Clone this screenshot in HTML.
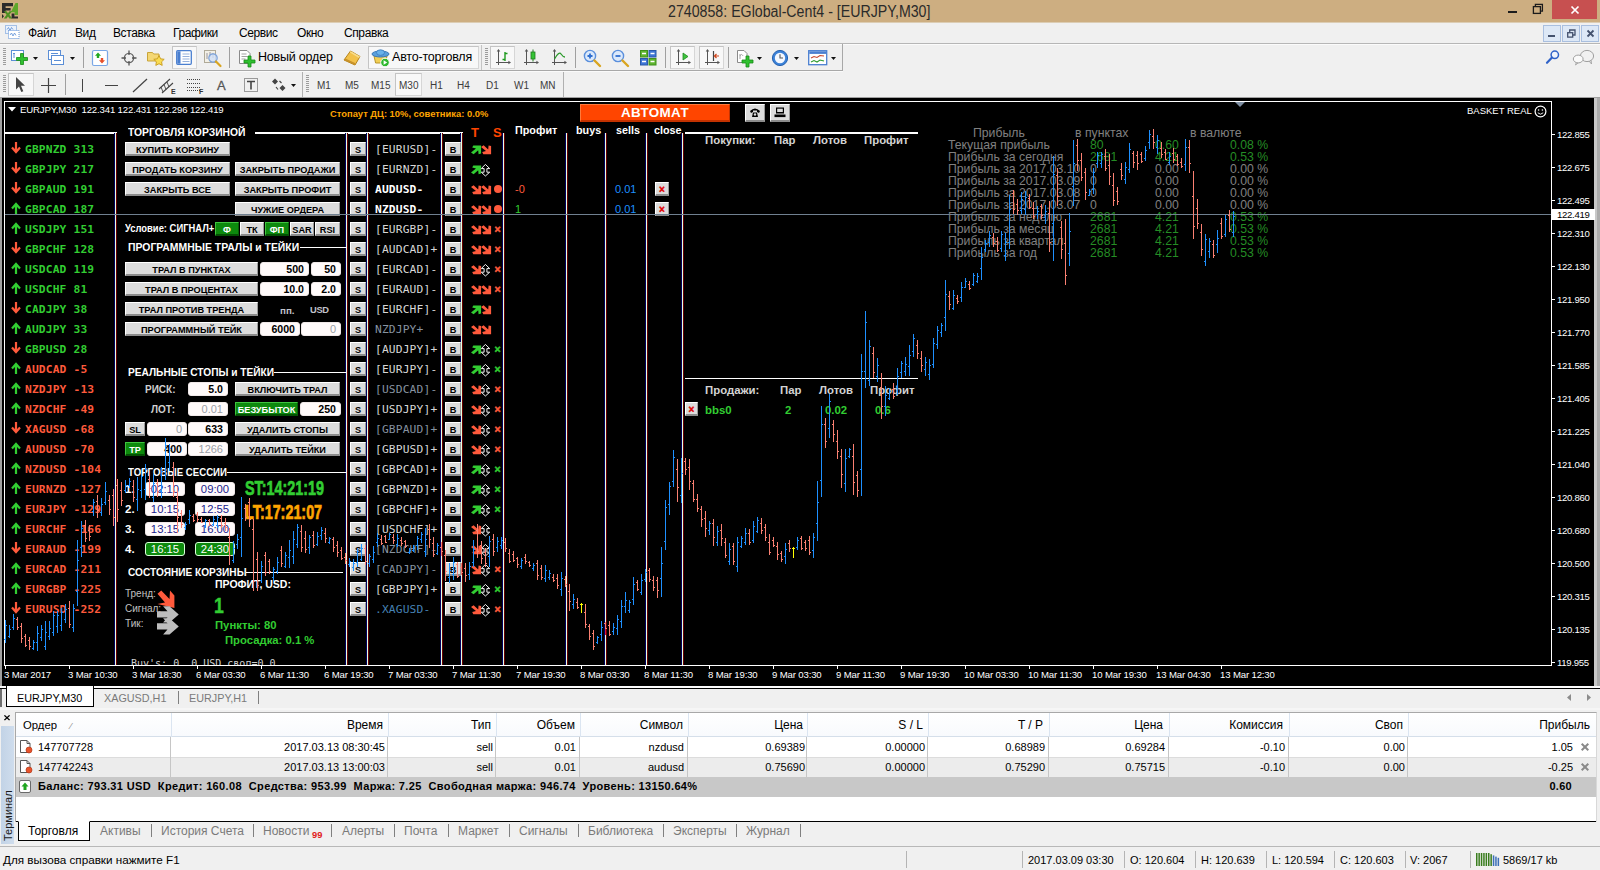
<!DOCTYPE html>
<html lang="ru"><head><meta charset="utf-8"><title>2740858: EGlobal-Cent4 - [EURJPY,M30]</title>
<style>
html,body{margin:0;padding:0;}
body{width:1600px;height:870px;overflow:hidden;background:#f0f0f0;position:relative;font-family:"Liberation Sans",sans-serif;font-size:11px;color:#000;}
div{position:absolute;box-sizing:border-box;white-space:nowrap;}
svg{position:absolute;overflow:visible;}
.t{line-height:1;}
.menu{font-size:12px;letter-spacing:-0.4px;top:26px;color:#000;}
.tb{font-size:12.5px;letter-spacing:-0.2px;}
.tf{font-size:10px;color:#3c3c3c;}
.btn{background:#dcdcdc;border-top:1px solid #fff;border-left:1px solid #fff;border-right:1px solid #9a9a9a;border-bottom:2px solid #8c8c8c;color:#000;font-weight:bold;font-size:9.2px;text-align:center;line-height:12px;}
.btn span{position:absolute;left:50%;top:1px;transform:translateX(-50%);white-space:nowrap;}
.btn.g{background:#0d8a0d;color:#fff;border-top:1px solid #3fc33f;border-left:1px solid #3fc33f;border-right:1px solid #056005;border-bottom:2px solid #045004;}
.inp{background:#fffafa;border-radius:3px;color:#000;font-size:10.6px;font-weight:bold;text-align:right;line-height:13px;padding-right:4px;border:1px solid #f0e8e8;}
.inp.gy{color:#9a9ea6;font-weight:normal;font-size:11px;}
.inp.nv{color:#1a1a8c;text-align:center;padding-right:0;font-weight:normal;font-size:11.3px;}
.inp.gr{background:#0d8a0d;color:#fff;text-align:center;padding-right:0;border:1px solid #d8ffd8;font-weight:normal;font-size:11.3px;}
.hd{color:#fff;font-weight:bold;font-size:11px;transform:scaleX(.94);transform-origin:0 0;}
.mono{font-family:"DejaVu Sans Mono","Liberation Mono",monospace;font-weight:bold;font-size:11.25px;letter-spacing:.15px;}
.ax{color:#fff;font-size:9.6px;letter-spacing:-0.15px;}
.axp{letter-spacing:-0.3px;}
.st{font-size:12.25px;color:#808080;}
.gn{color:#258d25;}
.cell{font-size:11px;color:#000;}
.tab{font-size:12px;color:#7a7a7a;}
</style></head>
<body>
<div style="left:0px;top:0px;width:1600px;height:22px;background:#cdae81;"></div>
<div style="left:0px;top:22px;width:1600px;height:1px;background:#dccdb4;"></div>
<svg style="left:2px;top:3px" width="17" height="16" viewBox="0 0 17 16"><path d="M0 0 H11 V3.300 H3.600 V5 H8.600 V7.600 H3.600 V10 H0 Z" fill="#2a2a2a"/><path d="M13.500 0 L16 0 L16 12 L12.600 12 L12.600 9.200 L8.800 9.200 Z" fill="#5fa72a"/><path d="M0 11 L2 13.200 L0 15.600 Z" fill="#2a2a2a"/><path d="M1.800 8.200 H4.600 L6 10.200 L7.400 8.200 H10 L7.400 11.800 L10.200 15.600 H7.400 L6 13.500 L4.600 15.600 H1.800 L4.600 11.800 Z" fill="#4c8f22"/><path d="M9.600 10.400 H12.400 V13.400 H16 V15.600 H9.600 Z" fill="#2a2a2a"/></svg>
<div class="t" style="left:668px;top:3.7px;font-size:16px;color:#2a2a2a;transform:scaleX(.887);transform-origin:0 0;">2740858: EGlobal-Cent4 - [EURJPY,M30]</div>
<div style="left:1508px;top:10.6px;width:8.5px;height:2.4px;background:#1c1c1c;"></div>
<svg style="left:1532px;top:3px" width="12" height="12" viewBox="0 0 12 12" fill="none" stroke="#1c1c1c" stroke-width="1.300"><rect x="1.400" y="3.600" width="7" height="6.800"/><path d="M3.400 3.400 V1.400 H10.400 V8.200 H8.600"/></svg>
<div style="left:1552px;top:0px;width:45px;height:19px;background:#c75050;"></div>
<svg style="left:1571px;top:5.500px" width="8" height="8" viewBox="0 0 8 8" stroke="#fff" stroke-width="1.700"><path d="M0.500 0.500 L7.500 7.500 M7.500 0.500 L0.500 7.500"/></svg>
<div style="left:0px;top:23px;width:1600px;height:21px;background:#f0f0f0;"></div>
<div style="left:0px;top:43px;width:1600px;height:1px;background:#b6b6b6;"></div>
<svg style="left:5px;top:25px" width="15" height="14" viewBox="0 0 15 14" fill="#fff" stroke="#5b8ed6" stroke-width="1"><rect x="0.500" y="0.500" width="11" height="8" stroke-dasharray="1 1" fill="#eaf1fb"/><path d="M2 4.500 l1.500 -2 1.500 3 1.500 -3 1.500 2" fill="none" stroke-width="0.800"/><rect x="3.500" y="5.500" width="10.500" height="8" stroke-dasharray="1 1"/><path d="M5 10 l1.500 -2 1.500 3 1.500 -3 1.500 2.500" fill="none" stroke-width="0.800"/></svg>
<div class="t menu" style="left:28px;top:27px;">Файл</div>
<div class="t menu" style="left:75px;top:27px;">Вид</div>
<div class="t menu" style="left:113px;top:27px;">Вставка</div>
<div class="t menu" style="left:173px;top:27px;">Графики</div>
<div class="t menu" style="left:239px;top:27px;">Сервис</div>
<div class="t menu" style="left:297px;top:27px;">Окно</div>
<div class="t menu" style="left:344px;top:27px;">Справка</div>
<div style="left:1543px;top:24.5px;width:18px;height:17px;background:#dde8f6;border:1px solid #a9bfdf;"></div>
<div style="left:1562px;top:24.5px;width:18px;height:17px;background:#dde8f6;border:1px solid #a9bfdf;"></div>
<div style="left:1581px;top:24.5px;width:18px;height:17px;background:#dde8f6;border:1px solid #a9bfdf;"></div>
<div style="left:1548px;top:34.7px;width:6.5px;height:2.3px;background:#44526e;"></div>
<svg style="left:1567px;top:28.500px" width="9" height="9" viewBox="0 0 9 9" fill="none" stroke="#44526e" stroke-width="1.300"><rect x="0.700" y="3.700" width="5" height="4.400"/><path d="M2.700 3.400 V1 H8 V6 H6"/></svg>
<svg style="left:1587px;top:30px" width="7" height="7" viewBox="0 0 7 7" stroke="#44526e" stroke-width="1.800"><path d="M0.500 0.500 L6.500 6.500 M6.500 0.500 L0.500 6.500"/></svg>
<div style="left:0px;top:44px;width:1600px;height:27px;background:#f0f0f0;border-top:1px solid #fbfbfb;"></div>
<div style="left:0px;top:70px;width:843px;height:1px;background:#a8a8a8;"></div>
<div style="left:842px;top:44px;width:1px;height:27px;background:#a8a8a8;"></div>
<div style="left:0px;top:71px;width:1600px;height:27px;background:#f0f0f0;"></div>
<div style="left:0px;top:71px;width:843px;height:1px;background:#fafafa;"></div>
<div style="left:302px;top:72px;width:1px;height:25px;background:#b0b0b0;"></div>
<div style="left:563px;top:72px;width:1px;height:25px;background:#b0b0b0;"></div>
<div style="left:3px;top:48px;width:3px;height:18px;background:repeating-linear-gradient(180deg,#9c9c9c 0,#9c9c9c 1px,#f0f0f0 1px,#f0f0f0 2px);"></div>
<div style="left:3px;top:75px;width:3px;height:18px;background:repeating-linear-gradient(180deg,#9c9c9c 0,#9c9c9c 1px,#f0f0f0 1px,#f0f0f0 2px);"></div>
<div style="left:485px;top:48px;width:3px;height:18px;background:repeating-linear-gradient(180deg,#9c9c9c 0,#9c9c9c 1px,#f0f0f0 1px,#f0f0f0 2px);"></div>
<div style="left:306px;top:75px;width:3px;height:18px;background:repeating-linear-gradient(180deg,#9c9c9c 0,#9c9c9c 1px,#f0f0f0 1px,#f0f0f0 2px);"></div>
<div style="left:83px;top:47px;width:1px;height:21px;background:#a0a0a0;"></div>
<div style="left:229px;top:47px;width:1px;height:21px;background:#a0a0a0;"></div>
<div style="left:575px;top:47px;width:1px;height:21px;background:#a0a0a0;"></div>
<div style="left:665px;top:47px;width:1px;height:21px;background:#a0a0a0;"></div>
<div style="left:728px;top:47px;width:1px;height:21px;background:#a0a0a0;"></div>
<div style="left:481px;top:45px;width:1px;height:25px;background:#c4c4c4;"></div>
<div style="left:65px;top:74px;width:1px;height:21px;background:#a0a0a0;"></div>
<div style="left:172px;top:46px;width:25px;height:23px;background:#f8f8f8;border:1px solid #d6d6d6;border-top-color:#c4c4c4;border-left-color:#c4c4c4;"></div>
<div style="left:368px;top:46px;width:111px;height:23px;background:#f8f8f8;border:1px solid #d6d6d6;border-top-color:#c4c4c4;border-left-color:#c4c4c4;"></div>
<div style="left:490px;top:46px;width:25px;height:23px;background:#f8f8f8;border:1px solid #d6d6d6;border-top-color:#c4c4c4;border-left-color:#c4c4c4;"></div>
<div style="left:670px;top:46px;width:25px;height:23px;background:#f8f8f8;border:1px solid #d6d6d6;border-top-color:#c4c4c4;border-left-color:#c4c4c4;"></div>
<div style="left:699px;top:46px;width:25px;height:23px;background:#f8f8f8;border:1px solid #d6d6d6;border-top-color:#c4c4c4;border-left-color:#c4c4c4;"></div>
<div style="left:8px;top:73px;width:26px;height:23px;background:#f8f8f8;border:1px solid #d6d6d6;border-top-color:#c4c4c4;border-left-color:#c4c4c4;"></div>
<div style="left:395px;top:73px;width:27px;height:23px;background:#f8f8f8;border:1px solid #d6d6d6;border-top-color:#c4c4c4;border-left-color:#c4c4c4;"></div>
<svg style="left:33px;top:56.5px" width="5" height="3" viewBox="0 0 5 3"><path d="M0 0 H5 L2.500 3 Z" fill="#111"/></svg>
<svg style="left:70px;top:56.5px" width="5" height="3" viewBox="0 0 5 3"><path d="M0 0 H5 L2.500 3 Z" fill="#111"/></svg>
<svg style="left:757px;top:56.5px" width="5" height="3" viewBox="0 0 5 3"><path d="M0 0 H5 L2.500 3 Z" fill="#111"/></svg>
<svg style="left:794px;top:56.5px" width="5" height="3" viewBox="0 0 5 3"><path d="M0 0 H5 L2.500 3 Z" fill="#111"/></svg>
<svg style="left:831px;top:56.5px" width="5" height="3" viewBox="0 0 5 3"><path d="M0 0 H5 L2.500 3 Z" fill="#111"/></svg>
<svg style="left:291px;top:83.5px" width="5" height="3" viewBox="0 0 5 3"><path d="M0 0 H5 L2.500 3 Z" fill="#111"/></svg>
<svg style="left:10px;top:49px" width="19" height="17" viewBox="0 0 19 17" ><rect x="1.5" y="1.5" width="12" height="10" fill="#fff" stroke="#5b8ed6"/><path d="M4 4 v5 M3 5 l1-1 1 1" stroke="#5b8ed6" fill="none"/><path d="M10.5 4.5 h3 v4.0 h4.0 v3 h-4.0 v4.0 h-3 v-4.0 h-4.0 v-3 h4.0 z" fill="#2fc02f" stroke="#168a16" stroke-width="0.8"/></svg>
<svg style="left:47px;top:49px" width="19" height="17" viewBox="0 0 19 17" ><rect x="1.5" y="1.5" width="12" height="9" fill="#fff" stroke="#5b8ed6"/><rect x="4.5" y="6.5" width="12" height="9" fill="#fff" stroke="#5b8ed6"/><path d="M4 4.5 h7 M7 11.5 h7" stroke="#5b8ed6"/></svg>
<svg style="left:92px;top:50px" width="16" height="16" viewBox="0 0 16 16" ><rect x="0.5" y="0.5" width="15" height="15" rx="1.5" fill="#fff" stroke="#7aa7e6" stroke-width="1.2"/><path d="M6 2.5 l3 3.2 h-1.8 v2.3 h-2.4 v-2.3 h-1.8 z" fill="#22a822"/><path d="M10 13.5 l-3 -3.2 h1.8 v-2.3 h2.4 v2.3 h1.8 z" fill="#e8502a"/></svg>
<svg style="left:121px;top:50px" width="16" height="16" viewBox="0 0 16 16" ><circle cx="8" cy="8" r="4.6" fill="none" stroke="#666" stroke-width="1.4"/><path d="M8 0.5 V5 M8 11 V15.5 M0.5 8 H5 M11 8 H15.5" stroke="#555" stroke-width="1.3"/></svg>
<svg style="left:146px;top:49px" width="20" height="18" viewBox="0 0 20 18" ><path d="M1.5 3.5 h5 l1.2 1.5 h5.3 v7 h-11.5 z" fill="#f4d774" stroke="#c9a53a"/><path d="M13 6.5 l1.6 3.3 3.6 0.5 -2.6 2.5 0.6 3.6 -3.2 -1.7 -3.2 1.7 0.6 -3.6 -2.6 -2.5 3.6 -0.5 z" fill="#f9dc52" stroke="#c79a1c" stroke-width="0.9"/></svg>
<svg style="left:176px;top:50px" width="16" height="15" viewBox="0 0 16 15" ><rect x="0.7" y="0.7" width="14.6" height="13.6" rx="1" fill="#fff" stroke="#4a7fd0" stroke-width="1.3"/><rect x="1.3" y="1.3" width="3.2" height="12.4" fill="#4a7fd0"/><path d="M6.5 4 h7 M6.5 6.5 h7 M6.5 9 h7 M6.5 11.5 h7" stroke="#8aa8d8" stroke-width="0.9"/></svg>
<svg style="left:203px;top:49px" width="20" height="19" viewBox="0 0 20 19" ><rect x="1.5" y="1.5" width="11" height="12" fill="#f3f0e6" stroke="#b0aa98"/><path d="M4 4 v6 M7 3 v5 M10 4 v5" stroke="#9a96a0" stroke-width="1"/><circle cx="10" cy="9" r="4.2" fill="#cfe0f7" fill-opacity="0.8" stroke="#7da2d8" stroke-width="1.2"/><path d="M13 12.5 l4.5 4.5" stroke="#d9a521" stroke-width="2.2" stroke-linecap="round"/></svg>
<svg style="left:238px;top:49px" width="18" height="19" viewBox="0 0 18 19" ><path d="M1.5 1.5 h7.5 l3 3 v10 h-10.5 z" fill="#fff" stroke="#8a8a8a"/><path d="M3.5 5 h5 M3.5 7.5 h6 M3.5 10 h4" stroke="#999" stroke-width="0.9"/><path d="M10.0 7.0 h3 v4.0 h4.0 v3 h-4.0 v4.0 h-3 v-4.0 h-4.0 v-3 h4.0 z" fill="#2fc02f" stroke="#168a16" stroke-width="0.8"/></svg>
<div class="t tb" style="left:258px;top:51px;">Новый ордер</div>
<svg style="left:343px;top:49px" width="20" height="18" viewBox="0 0 20 18" ><path d="M1 11 L7.5 2 L17 7.5 L12 16 Z" fill="#f2c14a" stroke="#b5831a" stroke-width="1"/><path d="M1 11 L12 16 L12.6 14.2 L2.4 9.4 Z" fill="#c8922a"/><path d="M7.5 2 L17 7.5 L16 9 L7 3.5 Z" fill="#f8dc8a"/></svg>
<svg style="left:371px;top:48px" width="20" height="20" viewBox="0 0 20 20" ><path d="M3 8 h13 l-1.6 7 h-9.8 z" fill="#f2cf55" stroke="#b8952a"/><ellipse cx="9.5" cy="6" rx="8.5" ry="3" fill="#5aa0dc" stroke="#3a78b8"/><ellipse cx="9.5" cy="4.6" rx="4" ry="2.8" fill="#6ab2ea" stroke="#3a78b8" stroke-width="0.8"/><circle cx="14" cy="14.5" r="4.3" fill="#2db82d" stroke="#fff" stroke-width="1"/><path d="M12.6 12.2 l3.6 2.3 -3.6 2.3 z" fill="#fff"/></svg>
<div class="t tb" style="left:392px;top:51px;">Авто-торговля</div>
<svg style="left:495px;top:49px" width="17" height="17" viewBox="0 0 17 17" ><path d="M3.5 1 V16 M1 13.5 H15" stroke="#555" stroke-width="1" fill="none"/><path d="M3.5 0 l-1.800 2.600 h3.600 z M16 13.5 l-2.600 -1.800 v3.600 z" fill="#555"/><path d="M10 3 V12 M10 4.5 h2.5 M7.5 10.5 h2.5" stroke="#1f9a1f" stroke-width="1.4" fill="none"/></svg>
<svg style="left:523px;top:49px" width="17" height="17" viewBox="0 0 17 17" ><path d="M3.5 1 V16 M1 13.5 H15" stroke="#555" stroke-width="1" fill="none"/><path d="M3.5 0 l-1.800 2.600 h3.600 z M16 13.5 l-2.600 -1.800 v3.600 z" fill="#555"/><path d="M10 0.5 V12.5" stroke="#1f7a1f" stroke-width="1"/><rect x="8" y="3" width="4" height="7" fill="#35c435" stroke="#1f7a1f" stroke-width="0.8"/></svg>
<svg style="left:551px;top:49px" width="17" height="17" viewBox="0 0 17 17" ><path d="M3.5 1 V16 M1 13.5 H15" stroke="#555" stroke-width="1" fill="none"/><path d="M3.5 0 l-1.800 2.600 h3.600 z M16 13.5 l-2.600 -1.800 v3.600 z" fill="#555"/><path d="M3.5 10 Q8 2 10 5 T14 8" stroke="#2a9a2a" stroke-width="1.3" fill="none"/></svg>
<svg style="left:583px;top:49px" width="20" height="19" viewBox="0 0 20 19" ><circle cx="7" cy="7" r="5.6" fill="#dbe9fb" stroke="#5a8fdc" stroke-width="1.4"/><path d="M4.5 7 h5 M7 4.5 v5" stroke="#2f6fd0" stroke-width="1.8"/><path d="M11.5 11.5 l5.5 5.5" stroke="#d9a521" stroke-width="2.4" stroke-linecap="round"/></svg>
<svg style="left:611px;top:49px" width="20" height="19" viewBox="0 0 20 19" ><circle cx="7" cy="7" r="5.6" fill="#dbe9fb" stroke="#5a8fdc" stroke-width="1.4"/><path d="M4.5 7 h5" stroke="#2f6fd0" stroke-width="1.8"/><path d="M11.5 11.5 l5.5 5.5" stroke="#d9a521" stroke-width="2.4" stroke-linecap="round"/></svg>
<svg style="left:640px;top:50px" width="17" height="16" viewBox="0 0 17 16" ><rect x="0.5" y="0.5" width="7" height="6.5" fill="#5fb52f" stroke="#3f8f1c"/><rect x="9" y="0.5" width="7" height="6.5" fill="#3e76d6" stroke="#2a58a8"/><rect x="0.5" y="8.5" width="7" height="6.5" fill="#3e76d6" stroke="#2a58a8"/><rect x="9" y="8.5" width="7" height="6.5" fill="#5fb52f" stroke="#3f8f1c"/><path d="M2 3.5 h4 M10.5 3.5 h4 M2 11.5 h4 M10.5 11.5 h4" stroke="#fff" stroke-width="1.6"/></svg>
<svg style="left:675px;top:49px" width="17" height="17" viewBox="0 0 17 17" ><path d="M3.5 1 V16 M1 13.5 H15" stroke="#555" stroke-width="1" fill="none"/><path d="M3.5 0 l-1.800 2.600 h3.600 z M16 13.5 l-2.600 -1.800 v3.600 z" fill="#555"/><path d="M8 4 l5 3.5 -5 3.5 z" fill="#3ec43e" stroke="#1f8a1f" stroke-width="0.8"/></svg>
<svg style="left:704px;top:49px" width="17" height="17" viewBox="0 0 17 17" ><path d="M3.5 1 V16 M1 13.5 H15" stroke="#555" stroke-width="1" fill="none"/><path d="M3.5 0 l-1.800 2.600 h3.600 z M16 13.5 l-2.600 -1.800 v3.600 z" fill="#555"/><path d="M9.5 2 V12" stroke="#444" stroke-width="1.2"/><path d="M15 7 h-4 M12.5 5 l-2 2 2 2" stroke="#d0451b" stroke-width="1.2" fill="none"/></svg>
<svg style="left:736px;top:49px" width="18" height="19" viewBox="0 0 18 19" ><path d="M1.5 1.5 h6.5 l3 3 v9 h-9.5 z" fill="#fff" stroke="#8a8a8a"/><path d="M4 5 v5 M4 7 c1 -2 2 -2 3 0" stroke="#999" stroke-width="0.9" fill="none"/><path d="M10.0 7.0 h3 v4.0 h4.0 v3 h-4.0 v4.0 h-3 v-4.0 h-4.0 v-3 h4.0 z" fill="#2fc02f" stroke="#168a16" stroke-width="0.8"/></svg>
<svg style="left:771px;top:49px" width="18" height="18" viewBox="0 0 18 18" ><circle cx="9" cy="9" r="7.6" fill="#3b82d8" stroke="#2561b0" stroke-width="1"/><circle cx="9" cy="9" r="5.2" fill="#f4f8ff"/><path d="M9 5.2 V9 H12" stroke="#555" stroke-width="1.1" fill="none"/></svg>
<svg style="left:808px;top:50px" width="20" height="16" viewBox="0 0 20 16" ><rect x="0.7" y="0.7" width="18" height="14" fill="#fff" stroke="#4a7fd0" stroke-width="1.3"/><rect x="1.3" y="1.3" width="16.8" height="2.6" fill="#4a7fd0"/><path d="M3 8 l3 -1.5 3 1 3 -2 4 0.5" stroke="#c8452a" stroke-width="1.1" fill="none"/><path d="M3 12 l3 -1.5 3 1.5 3 -2 4 1" stroke="#2c9a2c" stroke-width="1.1" fill="none"/></svg>
<svg style="left:1545px;top:50px" width="15" height="15" viewBox="0 0 15 15" ><circle cx="9.8" cy="4.8" r="3.7" fill="#eef3fc" stroke="#2f62c8" stroke-width="1.5"/><path d="M7 7.600 l-5 5.200" stroke="#2f62c8" stroke-width="2.2" stroke-linecap="round"/></svg>
<svg style="left:1572px;top:49px" width="24" height="18" viewBox="0 0 24 18" ><path d="M17 12 l2.500 3 -0.300 -3.600 z" fill="#e8e8e8" stroke="#9a9a9a" stroke-width="0.800"/><ellipse cx="15" cy="7" rx="6.600" ry="5.600" fill="#f1f1f1" stroke="#a0a0a0"/><path d="M4.500 13 l-1 3 3 -2.400 z" fill="#e8e8e8" stroke="#9a9a9a" stroke-width="0.800"/><ellipse cx="6.200" cy="10" rx="4.900" ry="3.900" fill="#fafafa" stroke="#a0a0a0"/></svg>
<svg style="left:14px;top:76px" width="12" height="17" viewBox="0 0 12 17" ><path d="M2 1 V13.5 L5 10.5 L7.3 16 L9.3 15.2 L7 9.8 H11 Z" fill="#444"/></svg>
<svg style="left:40px;top:77px" width="17" height="17" viewBox="0 0 17 17" ><path d="M8.5 1 V16 M1 8.500 H16" stroke="#444" stroke-width="1.2"/></svg>
<div style="left:82px;top:79px;width:1px;height:13px;background:#444;"></div>
<div style="left:105px;top:85px;width:13px;height:1px;background:#444;"></div>
<svg style="left:132px;top:78px" width="16" height="15" viewBox="0 0 16 15" ><path d="M1 14 L15 1" stroke="#444" stroke-width="1.2"/></svg>
<svg style="left:157px;top:76px" width="22" height="19" viewBox="0 0 22 19" ><path d="M2 13 L13 3 M5 17 L16 7" stroke="#444" stroke-width="1.1"/><path d="M4 11 l2 5 M7 8.500 l2 5 M10 6 l2 5" stroke="#444" stroke-width="0.9"/></svg>
<div class="t" style="left:171px;top:88px;font-size:7px;font-weight:bold;color:#333;">E</div>
<svg style="left:187px;top:78px" width="14" height="14" viewBox="0 0 14 14" ><path d="M0 1.500 H14 M0 5.500 H14 M0 9.500 H14 M0 12.500 H14" stroke="#444" stroke-width="1" stroke-dasharray="1 1"/></svg>
<div class="t" style="left:199px;top:88px;font-size:7px;font-weight:bold;color:#333;">F</div>
<div class="t" style="left:217px;top:79px;font-size:13px;color:#555;-webkit-text-stroke:0.3px #555;">A</div>
<svg style="left:243px;top:77px" width="16" height="16" viewBox="0 0 16 16" ><rect x="1.500" y="1.500" width="13" height="13" fill="none" stroke="#444" stroke-dasharray="1 1"/><path d="M4 4.500 H12 M8 4.500 V12.500" stroke="#444" stroke-width="1.600"/></svg>
<svg style="left:271px;top:78px" width="16" height="14" viewBox="0 0 16 14" ><path d="M4 0.500 l3 3 -3 3 -3 -3 z M11.500 7 l3 3 -3 3 -3 -3 z" fill="#444"/><path d="M5 9 l2 2.500 M8.500 3 l2 2" stroke="#444" stroke-width="1.2"/></svg>
<div class="t tf" style="left:317px;top:81px;">M1</div>
<div class="t tf" style="left:345px;top:81px;">M5</div>
<div class="t tf" style="left:371px;top:81px;">M15</div>
<div class="t tf" style="left:399px;top:81px;">M30</div>
<div class="t tf" style="left:430px;top:81px;">H1</div>
<div class="t tf" style="left:457px;top:81px;">H4</div>
<div class="t tf" style="left:486px;top:81px;">D1</div>
<div class="t tf" style="left:514px;top:81px;">W1</div>
<div class="t tf" style="left:540px;top:81px;">MN</div>
<div style="left:0px;top:97px;width:1600px;height:1px;background:#a0a0a0;"></div>
<div style="left:0px;top:98px;width:1600px;height:588px;background:#000;"></div>
<div style="left:0px;top:98px;width:2px;height:588px;background:#a0a0a0;"></div>
<div style="left:1594px;top:98px;width:3px;height:588px;background:#c8c8c8;"></div>
<div style="left:1597px;top:98px;width:3px;height:588px;background:#ababab;"></div>
<div style="left:4px;top:101px;width:1548px;height:1px;background:#fff;"></div>
<div style="left:4px;top:101px;width:1px;height:565px;background:#fff;"></div>
<div style="left:4px;top:665px;width:1548px;height:1px;background:#fff;"></div>
<div style="left:1551px;top:101px;width:1px;height:565px;background:#fff;"></div>
<svg style="left:8px;top:107px" width="8" height="5" viewBox="0 0 8 5"><path d="M0 0 H8 L4 4.500 Z" fill="#fff"/></svg>
<div class="t ax" style="left:20px;top:105px;">EURJPY,M30&nbsp; 122.341 122.431 122.296 122.419</div>
<div class="t" style="left:330px;top:109px;font-size:9.4px;font-weight:bold;color:#ffa500;">Стопаут ДЦ: 10%, советника: 0.0%</div>
<div style="left:580px;top:104px;width:150px;height:18px;background:#ff4500;border-top:1px solid #ff7a3a;border-left:1px solid #ff7a3a;border-bottom:2px solid #c43200;border-right:1px solid #c43200;color:#fff;font-weight:bold;font-size:13.4px;letter-spacing:.4px;text-align:center;line-height:16.500px;">АВТОМАТ</div>
<div class="btn" style="left:745px;top:104px;width:20px;height:18px;"></div>
<div class="btn" style="left:770px;top:104px;width:20px;height:18px;"></div>
<svg style="left:749px;top:107px" width="12" height="11" viewBox="0 0 12 11" ><path d="M1 4 Q6 -1 11 4 L10 6 L8 5 V3.500 H4 V5 L2 6 Z" fill="#000"/><path d="M3 10 L4 5.500 H8 L9 10 Z" fill="#000"/><circle cx="6" cy="7.500" r="1.200" fill="#dcdcdc"/></svg>
<svg style="left:774px;top:107px" width="12" height="11" viewBox="0 0 12 11" ><rect x="2" y="0.500" width="8" height="6" fill="#000"/><rect x="3.200" y="1.700" width="5.600" height="3.300" fill="#dcdcdc"/><rect x="0.500" y="7.500" width="11" height="2.600" fill="#000"/></svg>
<div class="t ax" style="left:1467px;top:106px;font-size:9.5px;letter-spacing:0;">BASKET REAL</div>
<svg style="left:1534px;top:105px" width="13" height="13" viewBox="0 0 13 13" ><circle cx="6.500" cy="6.500" r="5.400" fill="none" stroke="#fff" stroke-width="1.200"/><circle cx="4.600" cy="5" r="0.800" fill="#fff"/><circle cx="8.400" cy="5" r="0.800" fill="#fff"/><path d="M3.800 7.800 Q6.500 10.600 9.200 7.800" stroke="#fff" stroke-width="0.9" fill="none"/></svg>
<svg style="left:1235px;top:102px" width="10" height="5" viewBox="0 0 10 5"><path d="M0 0 H10 L5 5 Z" fill="#7f8fa3"/></svg>
<div style="left:5px;top:132px;width:112px;height:2px;background:#fff;"></div>
<div style="left:255px;top:132px;width:208px;height:2px;background:#fff;"></div>
<div style="left:685px;top:132px;width:233px;height:2px;background:#fff;"></div>
<div style="left:685px;top:378px;width:233px;height:1px;background:#fff;"></div>
<div style="left:114px;top:133px;width:3px;height:532px;background:linear-gradient(90deg,#000060 0,#000060 1px,#e4ffe4 1px,#e4ffe4 2px,#6a0000 2px);"></div>
<div style="left:345px;top:133px;width:3px;height:532px;background:linear-gradient(90deg,#000060 0,#000060 1px,#e4ffe4 1px,#e4ffe4 2px,#6a0000 2px);"></div>
<div style="left:366px;top:133px;width:3px;height:532px;background:linear-gradient(90deg,#000060 0,#000060 1px,#e4ffe4 1px,#e4ffe4 2px,#6a0000 2px);"></div>
<div style="left:440px;top:133px;width:3px;height:532px;background:linear-gradient(90deg,#000060 0,#000060 1px,#e4ffe4 1px,#e4ffe4 2px,#6a0000 2px);"></div>
<div style="left:460px;top:133px;width:3px;height:532px;background:linear-gradient(90deg,#000060 0,#000060 1px,#e4ffe4 1px,#e4ffe4 2px,#6a0000 2px);"></div>
<div style="left:502px;top:133px;width:3px;height:532px;background:linear-gradient(90deg,#000060 0,#000060 1px,#e4ffe4 1px,#e4ffe4 2px,#6a0000 2px);"></div>
<div style="left:565px;top:133px;width:3px;height:532px;background:linear-gradient(90deg,#000060 0,#000060 1px,#e4ffe4 1px,#e4ffe4 2px,#6a0000 2px);"></div>
<div style="left:604px;top:133px;width:3px;height:532px;background:linear-gradient(90deg,#000060 0,#000060 1px,#e4ffe4 1px,#e4ffe4 2px,#6a0000 2px);"></div>
<div style="left:645px;top:133px;width:3px;height:532px;background:linear-gradient(90deg,#000060 0,#000060 1px,#e4ffe4 1px,#e4ffe4 2px,#6a0000 2px);"></div>
<div style="left:681px;top:133px;width:3px;height:532px;background:linear-gradient(90deg,#000060 0,#000060 1px,#e4ffe4 1px,#e4ffe4 2px,#6a0000 2px);"></div>
<svg style="left:11px;top:142px" width="10" height="11" viewBox="0 0 10 11" ><path d="M5 0 V9.500 M1 5.500 L5 10 L9 5.500" stroke="#ff5a3c" stroke-width="2.200" fill="none"/></svg>
<div class="t mono" style="left:25px;top:144px;color:#32cd32;">GBPNZD 313</div>
<svg style="left:11px;top:162px" width="10" height="11" viewBox="0 0 10 11" ><path d="M5 0 V9.500 M1 5.500 L5 10 L9 5.500" stroke="#ff5a3c" stroke-width="2.200" fill="none"/></svg>
<div class="t mono" style="left:25px;top:164px;color:#32cd32;">GBPJPY 217</div>
<svg style="left:11px;top:182px" width="10" height="11" viewBox="0 0 10 11" ><path d="M5 0 V9.500 M1 5.500 L5 10 L9 5.500" stroke="#ff5a3c" stroke-width="2.200" fill="none"/></svg>
<div class="t mono" style="left:25px;top:184px;color:#32cd32;">GBPAUD 191</div>
<svg style="left:11px;top:203px" width="10" height="11" viewBox="0 0 10 11" ><path d="M5 11 V1.500 M1 5.500 L5 1 L9 5.500" stroke="#32cd32" stroke-width="2.200" fill="none"/></svg>
<div class="t mono" style="left:25px;top:204px;color:#32cd32;">GBPCAD 187</div>
<svg style="left:11px;top:223px" width="10" height="11" viewBox="0 0 10 11" ><path d="M5 11 V1.500 M1 5.500 L5 1 L9 5.500" stroke="#32cd32" stroke-width="2.200" fill="none"/></svg>
<div class="t mono" style="left:25px;top:224px;color:#32cd32;">USDJPY 151</div>
<svg style="left:11px;top:242px" width="10" height="11" viewBox="0 0 10 11" ><path d="M5 0 V9.500 M1 5.500 L5 10 L9 5.500" stroke="#ff5a3c" stroke-width="2.200" fill="none"/></svg>
<div class="t mono" style="left:25px;top:244px;color:#32cd32;">GBPCHF 128</div>
<svg style="left:11px;top:263px" width="10" height="11" viewBox="0 0 10 11" ><path d="M5 11 V1.500 M1 5.500 L5 1 L9 5.500" stroke="#32cd32" stroke-width="2.200" fill="none"/></svg>
<div class="t mono" style="left:25px;top:264px;color:#32cd32;">USDCAD 119</div>
<svg style="left:11px;top:283px" width="10" height="11" viewBox="0 0 10 11" ><path d="M5 11 V1.500 M1 5.500 L5 1 L9 5.500" stroke="#32cd32" stroke-width="2.200" fill="none"/></svg>
<div class="t mono" style="left:25px;top:284px;color:#32cd32;">USDCHF 81</div>
<svg style="left:11px;top:302px" width="10" height="11" viewBox="0 0 10 11" ><path d="M5 0 V9.500 M1 5.500 L5 10 L9 5.500" stroke="#ff5a3c" stroke-width="2.200" fill="none"/></svg>
<div class="t mono" style="left:25px;top:304px;color:#32cd32;">CADJPY 38</div>
<svg style="left:11px;top:323px" width="10" height="11" viewBox="0 0 10 11" ><path d="M5 11 V1.500 M1 5.500 L5 1 L9 5.500" stroke="#32cd32" stroke-width="2.200" fill="none"/></svg>
<div class="t mono" style="left:25px;top:324px;color:#32cd32;">AUDJPY 33</div>
<svg style="left:11px;top:342px" width="10" height="11" viewBox="0 0 10 11" ><path d="M5 0 V9.500 M1 5.500 L5 10 L9 5.500" stroke="#ff5a3c" stroke-width="2.200" fill="none"/></svg>
<div class="t mono" style="left:25px;top:344px;color:#32cd32;">GBPUSD 28</div>
<svg style="left:11px;top:363px" width="10" height="11" viewBox="0 0 10 11" ><path d="M5 11 V1.500 M1 5.500 L5 1 L9 5.500" stroke="#32cd32" stroke-width="2.200" fill="none"/></svg>
<div class="t mono" style="left:25px;top:364px;color:#ff5a3c;">AUDCAD -5</div>
<svg style="left:11px;top:383px" width="10" height="11" viewBox="0 0 10 11" ><path d="M5 11 V1.500 M1 5.500 L5 1 L9 5.500" stroke="#32cd32" stroke-width="2.200" fill="none"/></svg>
<div class="t mono" style="left:25px;top:384px;color:#ff5a3c;">NZDJPY -13</div>
<svg style="left:11px;top:403px" width="10" height="11" viewBox="0 0 10 11" ><path d="M5 11 V1.500 M1 5.500 L5 1 L9 5.500" stroke="#32cd32" stroke-width="2.200" fill="none"/></svg>
<div class="t mono" style="left:25px;top:404px;color:#ff5a3c;">NZDCHF -49</div>
<svg style="left:11px;top:422px" width="10" height="11" viewBox="0 0 10 11" ><path d="M5 0 V9.500 M1 5.500 L5 10 L9 5.500" stroke="#ff5a3c" stroke-width="2.200" fill="none"/></svg>
<div class="t mono" style="left:25px;top:424px;color:#ff5a3c;">XAGUSD -68</div>
<svg style="left:11px;top:443px" width="10" height="11" viewBox="0 0 10 11" ><path d="M5 11 V1.500 M1 5.500 L5 1 L9 5.500" stroke="#32cd32" stroke-width="2.200" fill="none"/></svg>
<div class="t mono" style="left:25px;top:444px;color:#ff5a3c;">AUDUSD -70</div>
<svg style="left:11px;top:463px" width="10" height="11" viewBox="0 0 10 11" ><path d="M5 11 V1.500 M1 5.500 L5 1 L9 5.500" stroke="#32cd32" stroke-width="2.200" fill="none"/></svg>
<div class="t mono" style="left:25px;top:464px;color:#ff5a3c;">NZDUSD -104</div>
<svg style="left:11px;top:483px" width="10" height="11" viewBox="0 0 10 11" ><path d="M5 11 V1.500 M1 5.500 L5 1 L9 5.500" stroke="#32cd32" stroke-width="2.200" fill="none"/></svg>
<div class="t mono" style="left:25px;top:484px;color:#ff5a3c;">EURNZD -127</div>
<svg style="left:11px;top:503px" width="10" height="11" viewBox="0 0 10 11" ><path d="M5 11 V1.500 M1 5.500 L5 1 L9 5.500" stroke="#32cd32" stroke-width="2.200" fill="none"/></svg>
<div class="t mono" style="left:25px;top:504px;color:#ff5a3c;">EURJPY -129</div>
<svg style="left:11px;top:523px" width="10" height="11" viewBox="0 0 10 11" ><path d="M5 11 V1.500 M1 5.500 L5 1 L9 5.500" stroke="#32cd32" stroke-width="2.200" fill="none"/></svg>
<div class="t mono" style="left:25px;top:524px;color:#ff5a3c;">EURCHF -166</div>
<svg style="left:11px;top:542px" width="10" height="11" viewBox="0 0 10 11" ><path d="M5 0 V9.500 M1 5.500 L5 10 L9 5.500" stroke="#ff5a3c" stroke-width="2.200" fill="none"/></svg>
<div class="t mono" style="left:25px;top:544px;color:#ff5a3c;">EURAUD -199</div>
<svg style="left:11px;top:563px" width="10" height="11" viewBox="0 0 10 11" ><path d="M5 11 V1.500 M1 5.500 L5 1 L9 5.500" stroke="#32cd32" stroke-width="2.200" fill="none"/></svg>
<div class="t mono" style="left:25px;top:564px;color:#ff5a3c;">EURCAD -211</div>
<svg style="left:11px;top:583px" width="10" height="11" viewBox="0 0 10 11" ><path d="M5 11 V1.500 M1 5.500 L5 1 L9 5.500" stroke="#32cd32" stroke-width="2.200" fill="none"/></svg>
<div class="t mono" style="left:25px;top:584px;color:#ff5a3c;">EURGBP -225</div>
<svg style="left:11px;top:602px" width="10" height="11" viewBox="0 0 10 11" ><path d="M5 0 V9.500 M1 5.500 L5 10 L9 5.500" stroke="#ff5a3c" stroke-width="2.200" fill="none"/></svg>
<div class="t mono" style="left:25px;top:604px;color:#ff5a3c;">EURUSD -252</div>
<div class="t hd" style="left:128px;top:127px;">ТОРГОВЛЯ КОРЗИНОЙ</div>
<div class="btn" style="left:125px;top:142px;width:105px;height:14px;"><span>КУПИТЬ КОРЗИНУ</span></div>
<div class="btn" style="left:125px;top:162px;width:105px;height:14px;"><span>ПРОДАТЬ КОРЗИНУ</span></div>
<div class="btn" style="left:235px;top:162px;width:105px;height:14px;"><span>ЗАКРЫТЬ ПРОДАЖИ</span></div>
<div class="btn" style="left:125px;top:182px;width:105px;height:14px;"><span>ЗАКРЫТЬ ВСЕ</span></div>
<div class="btn" style="left:235px;top:182px;width:105px;height:14px;"><span>ЗАКРЫТЬ ПРОФИТ</span></div>
<div class="btn" style="left:235px;top:202px;width:105px;height:14px;"><span>ЧУЖИЕ ОРДЕРА</span></div>
<div class="t" style="left:125px;top:224px;font-size:10.4px;font-weight:bold;color:#fff;transform:scaleX(.905);transform-origin:0 0;">Условие: СИГНАЛ+</div>
<div class="btn g" style="left:215px;top:222px;width:24px;height:14px;"><span>Ф</span></div>
<div class="btn" style="left:240px;top:222px;width:24px;height:14px;"><span>ТК</span></div>
<div class="btn g" style="left:265px;top:222px;width:24px;height:14px;"><span>ФП</span></div>
<div class="btn" style="left:290px;top:222px;width:24px;height:14px;"><span>SAR</span></div>
<div class="btn" style="left:315px;top:222px;width:25px;height:14px;"><span>RSI</span></div>
<div class="t hd" style="left:128px;top:242px;transform:scaleX(.947);">ПРОГРАММНЫЕ ТРАЛЫ и ТЕЙКИ</div>
<div style="left:300px;top:247px;width:47px;height:1px;background:#fff;"></div>
<div class="btn" style="left:125px;top:262px;width:133px;height:14px;"><span>ТРАЛ В ПУНКТАХ</span></div>
<div class="inp" style="left:260px;top:262px;width:49px;height:14px;">500</div>
<div class="inp" style="left:311px;top:262px;width:30px;height:14px;">50</div>
<div class="btn" style="left:125px;top:282px;width:133px;height:14px;"><span>ТРАЛ В ПРОЦЕНТАХ</span></div>
<div class="inp" style="left:260px;top:282px;width:49px;height:14px;">10.0</div>
<div class="inp" style="left:311px;top:282px;width:30px;height:14px;">2.0</div>
<div class="btn" style="left:125px;top:302px;width:133px;height:14px;"><span>ТРАЛ ПРОТИВ ТРЕНДА</span></div>
<div class="t" style="left:280px;top:306px;font-size:9.8px;font-weight:bold;color:#c0c4cc;">пп.</div>
<div class="t" style="left:310px;top:306px;font-size:9.3px;font-weight:bold;color:#c0c4cc;letter-spacing:-0.3px;">USD</div>
<div class="btn" style="left:125px;top:322px;width:133px;height:14px;"><span>ПРОГРАММНЫЙ ТЕЙК</span></div>
<div class="inp" style="left:260px;top:322px;width:40px;height:14px;">6000</div>
<div class="inp gy" style="left:301px;top:322px;width:40px;height:14px;">0</div>
<div class="t hd" style="left:128px;top:367px;transform:scaleX(.923);">РЕАЛЬНЫЕ СТОПЫ и ТЕЙКИ</div>
<div style="left:274px;top:372px;width:73px;height:1px;background:#fff;"></div>
<div class="t" style="left:145px;top:384.5px;font-size:10px;font-weight:bold;color:#d0d0d0;">РИСК:</div>
<div class="inp" style="left:188px;top:382px;width:40px;height:14px;">5.0</div>
<div class="btn" style="left:235px;top:382px;width:105px;height:14px;"><span>ВКЛЮЧИТЬ ТРАЛ</span></div>
<div class="t" style="left:151px;top:404.5px;font-size:10px;font-weight:bold;color:#d0d0d0;">ЛОТ:</div>
<div class="inp gy" style="left:188px;top:402px;width:40px;height:14px;">0.01</div>
<div class="btn g" style="left:235px;top:402px;width:63px;height:14px;"><span>БЕЗУБЫТОК</span></div>
<div class="inp" style="left:300px;top:402px;width:41px;height:14px;">250</div>
<div class="btn" style="left:125px;top:422px;width:20px;height:14px;"><span>SL</span></div>
<div class="inp gy" style="left:147px;top:422px;width:40px;height:14px;">0</div>
<div class="inp" style="left:188px;top:422px;width:40px;height:14px;">633</div>
<div class="btn" style="left:235px;top:422px;width:105px;height:14px;"><span>УДАЛИТЬ СТОПЫ</span></div>
<div class="btn g" style="left:125px;top:442px;width:20px;height:14px;"><span>TP</span></div>
<div class="inp" style="left:147px;top:442px;width:40px;height:14px;">400</div>
<div class="inp gy" style="left:188px;top:442px;width:40px;height:14px;">1266</div>
<div class="btn" style="left:235px;top:442px;width:105px;height:14px;"><span>УДАЛИТЬ ТЕЙКИ</span></div>
<div class="t hd" style="left:128px;top:467px;transform:scaleX(.875);">ТОРГОВЫЕ СЕССИИ</div>
<div style="left:227px;top:472px;width:120px;height:1px;background:#fff;"></div>
<div class="t" style="left:125px;top:484px;font-size:11.5px;font-weight:bold;color:#fff;">1.</div>
<div class="inp nv" style="left:145px;top:482px;width:40px;height:14px;">02:10</div>
<div class="inp nv" style="left:195px;top:482px;width:40px;height:14px;">09:00</div>
<div class="t" style="left:125px;top:504px;font-size:11.5px;font-weight:bold;color:#fff;">2.</div>
<div class="inp nv" style="left:145px;top:502px;width:40px;height:14px;">10:15</div>
<div class="inp nv" style="left:195px;top:502px;width:40px;height:14px;">12:55</div>
<div class="t" style="left:125px;top:524px;font-size:11.5px;font-weight:bold;color:#fff;">3.</div>
<div class="inp nv" style="left:145px;top:522px;width:40px;height:14px;">13:15</div>
<div class="inp nv" style="left:195px;top:522px;width:40px;height:14px;">16:00</div>
<div class="t" style="left:125px;top:544px;font-size:11.5px;font-weight:bold;color:#fff;">4.</div>
<div class="inp gr" style="left:145px;top:542px;width:40px;height:14px;">16:15</div>
<div class="inp gr" style="left:195px;top:542px;width:40px;height:14px;">24:30</div>
<div class="t" style="left:245px;top:478px;font-size:20.5px;font-weight:bold;color:#32cd32;transform:scaleX(0.70);transform-origin:0 0;-webkit-text-stroke:0.7px #32cd32;">ST:14:21:19</div>
<div class="t" style="left:245px;top:502px;font-size:20.5px;font-weight:bold;color:#ffa500;transform:scaleX(0.70);transform-origin:0 0;-webkit-text-stroke:0.7px #ffa500;">LT:17:21:07</div>
<div class="t hd" style="left:128px;top:567px;transform:scaleX(.92);">СОСТОЯНИЕ КОРЗИНЫ</div>
<div style="left:246px;top:572px;width:97px;height:1px;background:#fff;"></div>
<div class="t" style="left:215px;top:579px;font-size:10.5px;font-weight:bold;color:#fff;">ПРОФИТ, USD:</div>
<div class="t" style="left:125px;top:589px;font-size:10px;color:#c0c0c0;">Тренд:</div>
<div class="t" style="left:125px;top:604px;font-size:10px;color:#c0c0c0;">Сигнал:</div>
<div class="t" style="left:125px;top:619px;font-size:10px;color:#c0c0c0;">Тик:</div>
<svg style="left:157px;top:590px" width="19" height="19" viewBox="0 0 19 19" ><path d="M0.500 3.750 L4.250 0.600 L12.500 9 L13 0.600 L17.400 5.600 L17.400 18 L0.500 14 L8 12.500 Z" fill="#ff5a3c"/></svg>
<svg style="left:157px;top:606px" width="22" height="17" viewBox="0 0 22 17" ><path d="M0 5.250 L10.500 5.250 L6.100 0.250 L12.500 0.250 L21.750 8.400 L12.500 16.500 L6.100 16.500 L10.500 11.600 L0 11.600 Z" fill="#bdbdbd"/></svg>
<svg style="left:157px;top:618px" width="22" height="17" viewBox="0 0 22 17" ><path d="M0 5.250 L10.500 5.250 L6.100 0.250 L12.500 0.250 L21.750 8.400 L12.500 16.500 L6.100 16.500 L10.500 11.600 L0 11.600 Z" fill="#bdbdbd"/></svg>
<div class="t" style="left:214px;top:594px;font-size:22.7px;font-weight:bold;color:#32cd32;transform:scaleX(0.78);transform-origin:0 0;-webkit-text-stroke:0.4px #32cd32;">1</div>
<div class="t" style="left:215px;top:620px;font-size:11.3px;font-weight:bold;color:#32cd32;">Пункты: 80</div>
<div class="t" style="left:225px;top:635px;font-size:11.3px;font-weight:bold;color:#32cd32;">Просадка: 0.1 %</div>
<div class="t mono" style="left:131px;top:659px;height:6px;overflow:hidden;color:#d0d0d0;font-weight:normal;font-size:10px;letter-spacing:0;">Buy's: 0&nbsp; 0 USD своп=0.0</div>
<div class="btn" style="left:350px;top:142px;width:16px;height:14px;"><span>S</span></div>
<div class="btn" style="left:445px;top:142px;width:16px;height:14px;"><span>B</span></div>
<div class="t mono" style="left:375px;top:144px;color:#d8d8d8;font-weight:normal;">[EURUSD]-</div>
<svg style="left:471px;top:145px" width="11" height="10" viewBox="0 0 11 10" ><path d="M2.300 0.400 L10.100 0.400 L10.100 8.500 L7.600 9.200 L7.200 5.200 L2.600 9.300 L0 7.600 L5 3.500 L1.200 2.600 Z" fill="#32cd32"/></svg>
<svg style="left:481.3px;top:145px" width="11" height="10" viewBox="0 0 11 10" ><path d="M2.300 9.200 L10.100 9.200 L10.100 1.100 L7.600 0.400 L7.200 4.400 L2.600 0.300 L0 2 L5 6.100 L1.200 7 Z" fill="#ff5a3c"/></svg>
<div class="btn" style="left:350px;top:162px;width:16px;height:14px;"><span>S</span></div>
<div class="btn" style="left:445px;top:162px;width:16px;height:14px;"><span>B</span></div>
<div class="t mono" style="left:375px;top:164px;color:#d8d8d8;font-weight:normal;">[EURNZD]-</div>
<svg style="left:471px;top:165px" width="11" height="10" viewBox="0 0 11 10" ><path d="M2.300 0.400 L10.100 0.400 L10.100 8.500 L7.600 9.200 L7.200 5.200 L2.600 9.300 L0 7.600 L5 3.500 L1.200 2.600 Z" fill="#32cd32"/></svg>
<svg style="left:481px;top:163.8px" width="9" height="12.5" viewBox="0 0 9 12.5" ><path d="M4.400 0.400 L8.700 4.600 H5.900 V8.200 H8.700 L4.400 12 L0.300 8.200 H3.100 V4.600 H0.300 Z" fill="#000" stroke="#f4f4f4" stroke-width="1"/></svg>
<div class="btn" style="left:350px;top:182px;width:16px;height:14px;"><span>S</span></div>
<div class="btn" style="left:445px;top:182px;width:16px;height:14px;"><span>B</span></div>
<div class="t mono" style="left:375px;top:184px;color:#ffffff;font-weight:bold;">AUDUSD-</div>
<svg style="left:471px;top:185px" width="11" height="10" viewBox="0 0 11 10" ><path d="M2.300 9.200 L10.100 9.200 L10.100 1.100 L7.600 0.400 L7.200 4.400 L2.600 0.300 L0 2 L5 6.100 L1.200 7 Z" fill="#ff5a3c"/></svg>
<svg style="left:481.3px;top:185px" width="11" height="10" viewBox="0 0 11 10" ><path d="M2.300 9.200 L10.100 9.200 L10.100 1.100 L7.600 0.400 L7.200 4.400 L2.600 0.300 L0 2 L5 6.100 L1.200 7 Z" fill="#ff5a3c"/></svg>
<div style="left:494px;top:185px;width:8px;height:8px;background:#ff5a3c;border-radius:50%;"></div>
<div class="btn" style="left:350px;top:202px;width:16px;height:14px;"><span>S</span></div>
<div class="btn" style="left:445px;top:202px;width:16px;height:14px;"><span>B</span></div>
<div class="t mono" style="left:375px;top:204px;color:#ffffff;font-weight:bold;">NZDUSD-</div>
<svg style="left:471px;top:205px" width="11" height="10" viewBox="0 0 11 10" ><path d="M2.300 9.200 L10.100 9.200 L10.100 1.100 L7.600 0.400 L7.200 4.400 L2.600 0.300 L0 2 L5 6.100 L1.200 7 Z" fill="#ff5a3c"/></svg>
<svg style="left:481.3px;top:205px" width="11" height="10" viewBox="0 0 11 10" ><path d="M2.300 9.200 L10.100 9.200 L10.100 1.100 L7.600 0.400 L7.200 4.400 L2.600 0.300 L0 2 L5 6.100 L1.200 7 Z" fill="#ff5a3c"/></svg>
<div style="left:494px;top:205px;width:8px;height:8px;background:#ff5a3c;border-radius:50%;"></div>
<div class="btn" style="left:350px;top:222px;width:16px;height:14px;"><span>S</span></div>
<div class="btn" style="left:445px;top:222px;width:16px;height:14px;"><span>B</span></div>
<div class="t mono" style="left:375px;top:224px;color:#d8d8d8;font-weight:normal;">[EURGBP]-</div>
<svg style="left:471px;top:225px" width="11" height="10" viewBox="0 0 11 10" ><path d="M2.300 9.200 L10.100 9.200 L10.100 1.100 L7.600 0.400 L7.200 4.400 L2.600 0.300 L0 2 L5 6.100 L1.200 7 Z" fill="#ff5a3c"/></svg>
<svg style="left:481.3px;top:225px" width="11" height="10" viewBox="0 0 11 10" ><path d="M2.300 9.200 L10.100 9.200 L10.100 1.100 L7.600 0.400 L7.200 4.400 L2.600 0.300 L0 2 L5 6.100 L1.200 7 Z" fill="#ff5a3c"/></svg>
<div class="t" style="left:494.5px;top:224px;font-size:10.5px;font-weight:bold;-webkit-text-stroke:.5px;color:#ff5a3c;">×</div>
<div class="btn" style="left:350px;top:242px;width:16px;height:14px;"><span>S</span></div>
<div class="btn" style="left:445px;top:242px;width:16px;height:14px;"><span>B</span></div>
<div class="t mono" style="left:375px;top:244px;color:#d8d8d8;font-weight:normal;">[AUDCAD]+</div>
<svg style="left:471px;top:245px" width="11" height="10" viewBox="0 0 11 10" ><path d="M2.300 9.200 L10.100 9.200 L10.100 1.100 L7.600 0.400 L7.200 4.400 L2.600 0.300 L0 2 L5 6.100 L1.200 7 Z" fill="#ff5a3c"/></svg>
<svg style="left:481.3px;top:245px" width="11" height="10" viewBox="0 0 11 10" ><path d="M2.300 9.200 L10.100 9.200 L10.100 1.100 L7.600 0.400 L7.200 4.400 L2.600 0.300 L0 2 L5 6.100 L1.200 7 Z" fill="#ff5a3c"/></svg>
<div class="t" style="left:494.5px;top:244px;font-size:10.5px;font-weight:bold;-webkit-text-stroke:.5px;color:#ff5a3c;">×</div>
<div class="btn" style="left:350px;top:262px;width:16px;height:14px;"><span>S</span></div>
<div class="btn" style="left:445px;top:262px;width:16px;height:14px;"><span>B</span></div>
<div class="t mono" style="left:375px;top:264px;color:#d8d8d8;font-weight:normal;">[EURCAD]-</div>
<svg style="left:471px;top:265px" width="11" height="10" viewBox="0 0 11 10" ><path d="M2.300 9.200 L10.100 9.200 L10.100 1.100 L7.600 0.400 L7.200 4.400 L2.600 0.300 L0 2 L5 6.100 L1.200 7 Z" fill="#ff5a3c"/></svg>
<svg style="left:481px;top:263.8px" width="9" height="12.5" viewBox="0 0 9 12.5" ><path d="M4.400 0.400 L8.700 4.600 H5.900 V8.200 H8.700 L4.400 12 L0.300 8.200 H3.100 V4.600 H0.300 Z" fill="#000" stroke="#f4f4f4" stroke-width="1"/></svg>
<div class="t" style="left:494.5px;top:264px;font-size:10.5px;font-weight:bold;-webkit-text-stroke:.5px;color:#ff5a3c;">×</div>
<div class="btn" style="left:350px;top:282px;width:16px;height:14px;"><span>S</span></div>
<div class="btn" style="left:445px;top:282px;width:16px;height:14px;"><span>B</span></div>
<div class="t mono" style="left:375px;top:284px;color:#d8d8d8;font-weight:normal;">[EURAUD]-</div>
<svg style="left:471px;top:285px" width="11" height="10" viewBox="0 0 11 10" ><path d="M2.300 9.200 L10.100 9.200 L10.100 1.100 L7.600 0.400 L7.200 4.400 L2.600 0.300 L0 2 L5 6.100 L1.200 7 Z" fill="#ff5a3c"/></svg>
<svg style="left:481.3px;top:285px" width="11" height="10" viewBox="0 0 11 10" ><path d="M2.300 9.200 L10.100 9.200 L10.100 1.100 L7.600 0.400 L7.200 4.400 L2.600 0.300 L0 2 L5 6.100 L1.200 7 Z" fill="#ff5a3c"/></svg>
<div class="t" style="left:494.5px;top:284px;font-size:10.5px;font-weight:bold;-webkit-text-stroke:.5px;color:#ff5a3c;">×</div>
<div class="btn" style="left:350px;top:302px;width:16px;height:14px;"><span>S</span></div>
<div class="btn" style="left:445px;top:302px;width:16px;height:14px;"><span>B</span></div>
<div class="t mono" style="left:375px;top:304px;color:#d8d8d8;font-weight:normal;">[EURCHF]-</div>
<svg style="left:471px;top:305px" width="11" height="10" viewBox="0 0 11 10" ><path d="M2.300 0.400 L10.100 0.400 L10.100 8.500 L7.600 9.200 L7.200 5.200 L2.600 9.300 L0 7.600 L5 3.500 L1.200 2.600 Z" fill="#32cd32"/></svg>
<svg style="left:481.3px;top:305px" width="11" height="10" viewBox="0 0 11 10" ><path d="M2.300 9.200 L10.100 9.200 L10.100 1.100 L7.600 0.400 L7.200 4.400 L2.600 0.300 L0 2 L5 6.100 L1.200 7 Z" fill="#ff5a3c"/></svg>
<div class="btn" style="left:350px;top:322px;width:16px;height:14px;"><span>S</span></div>
<div class="btn" style="left:445px;top:322px;width:16px;height:14px;"><span>B</span></div>
<div class="t mono" style="left:375px;top:324px;color:#8793a0;font-weight:normal;">NZDJPY+</div>
<svg style="left:471px;top:325px" width="11" height="10" viewBox="0 0 11 10" ><path d="M2.300 9.200 L10.100 9.200 L10.100 1.100 L7.600 0.400 L7.200 4.400 L2.600 0.300 L0 2 L5 6.100 L1.200 7 Z" fill="#ff5a3c"/></svg>
<svg style="left:481.3px;top:325px" width="11" height="10" viewBox="0 0 11 10" ><path d="M2.300 9.200 L10.100 9.200 L10.100 1.100 L7.600 0.400 L7.200 4.400 L2.600 0.300 L0 2 L5 6.100 L1.200 7 Z" fill="#ff5a3c"/></svg>
<div class="btn" style="left:350px;top:342px;width:16px;height:14px;"><span>S</span></div>
<div class="btn" style="left:445px;top:342px;width:16px;height:14px;"><span>B</span></div>
<div class="t mono" style="left:375px;top:344px;color:#d8d8d8;font-weight:normal;">[AUDJPY]+</div>
<svg style="left:471px;top:345px" width="11" height="10" viewBox="0 0 11 10" ><path d="M2.300 0.400 L10.100 0.400 L10.100 8.500 L7.600 9.200 L7.200 5.200 L2.600 9.300 L0 7.600 L5 3.500 L1.200 2.600 Z" fill="#32cd32"/></svg>
<svg style="left:481px;top:343.8px" width="9" height="12.5" viewBox="0 0 9 12.5" ><path d="M4.400 0.400 L8.700 4.600 H5.900 V8.200 H8.700 L4.400 12 L0.300 8.200 H3.100 V4.600 H0.300 Z" fill="#000" stroke="#f4f4f4" stroke-width="1"/></svg>
<div class="t" style="left:494.5px;top:344px;font-size:10.5px;font-weight:bold;-webkit-text-stroke:.5px;color:#32cd32;">×</div>
<div class="btn" style="left:350px;top:362px;width:16px;height:14px;"><span>S</span></div>
<div class="btn" style="left:445px;top:362px;width:16px;height:14px;"><span>B</span></div>
<div class="t mono" style="left:375px;top:364px;color:#d8d8d8;font-weight:normal;">[EURJPY]-</div>
<svg style="left:471px;top:365px" width="11" height="10" viewBox="0 0 11 10" ><path d="M2.300 0.400 L10.100 0.400 L10.100 8.500 L7.600 9.200 L7.200 5.200 L2.600 9.300 L0 7.600 L5 3.500 L1.200 2.600 Z" fill="#32cd32"/></svg>
<svg style="left:481px;top:363.8px" width="9" height="12.5" viewBox="0 0 9 12.5" ><path d="M4.400 0.400 L8.700 4.600 H5.900 V8.200 H8.700 L4.400 12 L0.300 8.200 H3.100 V4.600 H0.300 Z" fill="#000" stroke="#f4f4f4" stroke-width="1"/></svg>
<div class="t" style="left:494.5px;top:364px;font-size:10.5px;font-weight:bold;-webkit-text-stroke:.5px;color:#32cd32;">×</div>
<div class="btn" style="left:350px;top:382px;width:16px;height:14px;"><span>S</span></div>
<div class="btn" style="left:445px;top:382px;width:16px;height:14px;"><span>B</span></div>
<div class="t mono" style="left:375px;top:384px;color:#8793a0;font-weight:normal;">[USDCAD]-</div>
<svg style="left:471px;top:385px" width="11" height="10" viewBox="0 0 11 10" ><path d="M2.300 9.200 L10.100 9.200 L10.100 1.100 L7.600 0.400 L7.200 4.400 L2.600 0.300 L0 2 L5 6.100 L1.200 7 Z" fill="#ff5a3c"/></svg>
<svg style="left:481px;top:383.8px" width="9" height="12.5" viewBox="0 0 9 12.5" ><path d="M4.400 0.400 L8.700 4.600 H5.900 V8.200 H8.700 L4.400 12 L0.300 8.200 H3.100 V4.600 H0.300 Z" fill="#000" stroke="#f4f4f4" stroke-width="1"/></svg>
<div class="t" style="left:494.5px;top:384px;font-size:10.5px;font-weight:bold;-webkit-text-stroke:.5px;color:#ff5a3c;">×</div>
<div class="btn" style="left:350px;top:402px;width:16px;height:14px;"><span>S</span></div>
<div class="btn" style="left:445px;top:402px;width:16px;height:14px;"><span>B</span></div>
<div class="t mono" style="left:375px;top:404px;color:#d8d8d8;font-weight:normal;">[USDJPY]+</div>
<svg style="left:471px;top:405px" width="11" height="10" viewBox="0 0 11 10" ><path d="M2.300 9.200 L10.100 9.200 L10.100 1.100 L7.600 0.400 L7.200 4.400 L2.600 0.300 L0 2 L5 6.100 L1.200 7 Z" fill="#ff5a3c"/></svg>
<svg style="left:481px;top:403.8px" width="9" height="12.5" viewBox="0 0 9 12.5" ><path d="M4.400 0.400 L8.700 4.600 H5.900 V8.200 H8.700 L4.400 12 L0.300 8.200 H3.100 V4.600 H0.300 Z" fill="#000" stroke="#f4f4f4" stroke-width="1"/></svg>
<div class="t" style="left:494.5px;top:404px;font-size:10.5px;font-weight:bold;-webkit-text-stroke:.5px;color:#ff5a3c;">×</div>
<div class="btn" style="left:350px;top:422px;width:16px;height:14px;"><span>S</span></div>
<div class="btn" style="left:445px;top:422px;width:16px;height:14px;"><span>B</span></div>
<div class="t mono" style="left:375px;top:424px;color:#8793a0;font-weight:normal;">[GBPAUD]+</div>
<svg style="left:471px;top:425px" width="11" height="10" viewBox="0 0 11 10" ><path d="M2.300 9.200 L10.100 9.200 L10.100 1.100 L7.600 0.400 L7.200 4.400 L2.600 0.300 L0 2 L5 6.100 L1.200 7 Z" fill="#ff5a3c"/></svg>
<svg style="left:481px;top:423.8px" width="9" height="12.5" viewBox="0 0 9 12.5" ><path d="M4.400 0.400 L8.700 4.600 H5.900 V8.200 H8.700 L4.400 12 L0.300 8.200 H3.100 V4.600 H0.300 Z" fill="#000" stroke="#f4f4f4" stroke-width="1"/></svg>
<div class="t" style="left:494.5px;top:424px;font-size:10.5px;font-weight:bold;-webkit-text-stroke:.5px;color:#ff5a3c;">×</div>
<div class="btn" style="left:350px;top:442px;width:16px;height:14px;"><span>S</span></div>
<div class="btn" style="left:445px;top:442px;width:16px;height:14px;"><span>B</span></div>
<div class="t mono" style="left:375px;top:444px;color:#d8d8d8;font-weight:normal;">[GBPUSD]+</div>
<svg style="left:471px;top:445px" width="11" height="10" viewBox="0 0 11 10" ><path d="M2.300 9.200 L10.100 9.200 L10.100 1.100 L7.600 0.400 L7.200 4.400 L2.600 0.300 L0 2 L5 6.100 L1.200 7 Z" fill="#ff5a3c"/></svg>
<svg style="left:481px;top:443.8px" width="9" height="12.5" viewBox="0 0 9 12.5" ><path d="M4.400 0.400 L8.700 4.600 H5.900 V8.200 H8.700 L4.400 12 L0.300 8.200 H3.100 V4.600 H0.300 Z" fill="#000" stroke="#f4f4f4" stroke-width="1"/></svg>
<div class="t" style="left:494.5px;top:444px;font-size:10.5px;font-weight:bold;-webkit-text-stroke:.5px;color:#ff5a3c;">×</div>
<div class="btn" style="left:350px;top:462px;width:16px;height:14px;"><span>S</span></div>
<div class="btn" style="left:445px;top:462px;width:16px;height:14px;"><span>B</span></div>
<div class="t mono" style="left:375px;top:464px;color:#d8d8d8;font-weight:normal;">[GBPCAD]+</div>
<svg style="left:471px;top:465px" width="11" height="10" viewBox="0 0 11 10" ><path d="M2.300 0.400 L10.100 0.400 L10.100 8.500 L7.600 9.200 L7.200 5.200 L2.600 9.300 L0 7.600 L5 3.500 L1.200 2.600 Z" fill="#32cd32"/></svg>
<svg style="left:481px;top:463.8px" width="9" height="12.5" viewBox="0 0 9 12.5" ><path d="M4.400 0.400 L8.700 4.600 H5.900 V8.200 H8.700 L4.400 12 L0.300 8.200 H3.100 V4.600 H0.300 Z" fill="#000" stroke="#f4f4f4" stroke-width="1"/></svg>
<div class="t" style="left:494.5px;top:464px;font-size:10.5px;font-weight:bold;-webkit-text-stroke:.5px;color:#32cd32;">×</div>
<div class="btn" style="left:350px;top:482px;width:16px;height:14px;"><span>S</span></div>
<div class="btn" style="left:445px;top:482px;width:16px;height:14px;"><span>B</span></div>
<div class="t mono" style="left:375px;top:484px;color:#d8d8d8;font-weight:normal;">[GBPNZD]+</div>
<svg style="left:471px;top:485px" width="11" height="10" viewBox="0 0 11 10" ><path d="M2.300 0.400 L10.100 0.400 L10.100 8.500 L7.600 9.200 L7.200 5.200 L2.600 9.300 L0 7.600 L5 3.500 L1.200 2.600 Z" fill="#32cd32"/></svg>
<svg style="left:481px;top:483.8px" width="9" height="12.5" viewBox="0 0 9 12.5" ><path d="M4.400 0.400 L8.700 4.600 H5.900 V8.200 H8.700 L4.400 12 L0.300 8.200 H3.100 V4.600 H0.300 Z" fill="#000" stroke="#f4f4f4" stroke-width="1"/></svg>
<div class="t" style="left:494.5px;top:484px;font-size:10.5px;font-weight:bold;-webkit-text-stroke:.5px;color:#32cd32;">×</div>
<div class="btn" style="left:350px;top:502px;width:16px;height:14px;"><span>S</span></div>
<div class="btn" style="left:445px;top:502px;width:16px;height:14px;"><span>B</span></div>
<div class="t mono" style="left:375px;top:504px;color:#d8d8d8;font-weight:normal;">[GBPCHF]+</div>
<svg style="left:471px;top:505px" width="11" height="10" viewBox="0 0 11 10" ><path d="M2.300 0.400 L10.100 0.400 L10.100 8.500 L7.600 9.200 L7.200 5.200 L2.600 9.300 L0 7.600 L5 3.500 L1.200 2.600 Z" fill="#32cd32"/></svg>
<svg style="left:481px;top:503.8px" width="9" height="12.5" viewBox="0 0 9 12.5" ><path d="M4.400 0.400 L8.700 4.600 H5.900 V8.200 H8.700 L4.400 12 L0.300 8.200 H3.100 V4.600 H0.300 Z" fill="#000" stroke="#f4f4f4" stroke-width="1"/></svg>
<div class="t" style="left:494.5px;top:504px;font-size:10.5px;font-weight:bold;-webkit-text-stroke:.5px;color:#32cd32;">×</div>
<div class="btn" style="left:350px;top:522px;width:16px;height:14px;"><span>S</span></div>
<div class="btn" style="left:445px;top:522px;width:16px;height:14px;"><span>B</span></div>
<div class="t mono" style="left:375px;top:524px;color:#d8d8d8;font-weight:normal;">[USDCHF]+</div>
<svg style="left:471px;top:525px" width="11" height="10" viewBox="0 0 11 10" ><path d="M2.300 9.200 L10.100 9.200 L10.100 1.100 L7.600 0.400 L7.200 4.400 L2.600 0.300 L0 2 L5 6.100 L1.200 7 Z" fill="#ff5a3c"/></svg>
<svg style="left:481px;top:523.8px" width="9" height="12.5" viewBox="0 0 9 12.5" ><path d="M4.400 0.400 L8.700 4.600 H5.900 V8.200 H8.700 L4.400 12 L0.300 8.200 H3.100 V4.600 H0.300 Z" fill="#000" stroke="#f4f4f4" stroke-width="1"/></svg>
<div class="btn" style="left:350px;top:542px;width:16px;height:14px;"><span>S</span></div>
<div class="btn" style="left:445px;top:542px;width:16px;height:14px;"><span>B</span></div>
<div class="t mono" style="left:375px;top:544px;color:#8793a0;font-weight:normal;">[NZDCHF]-</div>
<svg style="left:471px;top:545px" width="11" height="10" viewBox="0 0 11 10" ><path d="M2.300 9.200 L10.100 9.200 L10.100 1.100 L7.600 0.400 L7.200 4.400 L2.600 0.300 L0 2 L5 6.100 L1.200 7 Z" fill="#ff5a3c"/></svg>
<svg style="left:481px;top:543.8px" width="9" height="12.5" viewBox="0 0 9 12.5" ><path d="M4.400 0.400 L8.700 4.600 H5.900 V8.200 H8.700 L4.400 12 L0.300 8.200 H3.100 V4.600 H0.300 Z" fill="#000" stroke="#f4f4f4" stroke-width="1"/></svg>
<div class="btn" style="left:350px;top:562px;width:16px;height:14px;"><span>S</span></div>
<div class="btn" style="left:445px;top:562px;width:16px;height:14px;"><span>B</span></div>
<div class="t mono" style="left:375px;top:564px;color:#8793a0;font-weight:normal;">[CADJPY]-</div>
<svg style="left:471px;top:565px" width="11" height="10" viewBox="0 0 11 10" ><path d="M2.300 9.200 L10.100 9.200 L10.100 1.100 L7.600 0.400 L7.200 4.400 L2.600 0.300 L0 2 L5 6.100 L1.200 7 Z" fill="#ff5a3c"/></svg>
<svg style="left:481px;top:563.8px" width="9" height="12.5" viewBox="0 0 9 12.5" ><path d="M4.400 0.400 L8.700 4.600 H5.900 V8.200 H8.700 L4.400 12 L0.300 8.200 H3.100 V4.600 H0.300 Z" fill="#000" stroke="#f4f4f4" stroke-width="1"/></svg>
<div class="t" style="left:494.5px;top:564px;font-size:10.5px;font-weight:bold;-webkit-text-stroke:.5px;color:#ff5a3c;">×</div>
<div class="btn" style="left:350px;top:582px;width:16px;height:14px;"><span>S</span></div>
<div class="btn" style="left:445px;top:582px;width:16px;height:14px;"><span>B</span></div>
<div class="t mono" style="left:375px;top:584px;color:#d8d8d8;font-weight:normal;">[GBPJPY]+</div>
<svg style="left:471px;top:585px" width="11" height="10" viewBox="0 0 11 10" ><path d="M2.300 0.400 L10.100 0.400 L10.100 8.500 L7.600 9.200 L7.200 5.200 L2.600 9.300 L0 7.600 L5 3.500 L1.200 2.600 Z" fill="#32cd32"/></svg>
<svg style="left:481px;top:583.8px" width="9" height="12.5" viewBox="0 0 9 12.5" ><path d="M4.400 0.400 L8.700 4.600 H5.900 V8.200 H8.700 L4.400 12 L0.300 8.200 H3.100 V4.600 H0.300 Z" fill="#000" stroke="#f4f4f4" stroke-width="1"/></svg>
<div class="t" style="left:494.5px;top:584px;font-size:10.5px;font-weight:bold;-webkit-text-stroke:.5px;color:#32cd32;">×</div>
<div class="btn" style="left:350px;top:602px;width:16px;height:14px;"><span>S</span></div>
<div class="btn" style="left:445px;top:602px;width:16px;height:14px;"><span>B</span></div>
<div class="t mono" style="left:375px;top:604px;color:#4682b4;font-weight:normal;">.XAGUSD-</div>
<svg style="left:471px;top:605px" width="11" height="10" viewBox="0 0 11 10" ><path d="M2.300 9.200 L10.100 9.200 L10.100 1.100 L7.600 0.400 L7.200 4.400 L2.600 0.300 L0 2 L5 6.100 L1.200 7 Z" fill="#ff5a3c"/></svg>
<svg style="left:481px;top:603.8px" width="9" height="12.5" viewBox="0 0 9 12.5" ><path d="M4.400 0.400 L8.700 4.600 H5.900 V8.200 H8.700 L4.400 12 L0.300 8.200 H3.100 V4.600 H0.300 Z" fill="#000" stroke="#f4f4f4" stroke-width="1"/></svg>
<div class="t" style="left:494.5px;top:604px;font-size:10.5px;font-weight:bold;-webkit-text-stroke:.5px;color:#ff5a3c;">×</div>
<div class="t" style="left:471px;top:126px;font-size:13px;font-weight:bold;color:#ff4500;">T</div>
<div class="t" style="left:493px;top:126px;font-size:13px;font-weight:bold;color:#ff4500;">S</div>
<div class="t" style="left:515px;top:125px;font-size:10.8px;font-weight:bold;color:#fff;">Профит</div>
<div class="t" style="left:576px;top:125px;font-size:10.8px;font-weight:bold;color:#fff;">buys</div>
<div class="t" style="left:616px;top:125px;font-size:10.8px;font-weight:bold;color:#fff;">sells</div>
<div class="t" style="left:654px;top:125px;font-size:10.8px;font-weight:bold;color:#fff;">close</div>
<div class="t" style="left:515px;top:184px;font-size:11px;color:#ff5a3c;">-0</div>
<div class="t" style="left:515px;top:204px;font-size:11px;color:#32cd32;">1</div>
<div class="t" style="left:615px;top:184px;font-size:11px;color:#1e90ff;">0.01</div>
<div class="btn" style="left:655px;top:182px;width:14px;height:14px;"><span style="color:#e00000;font-size:10px;line-height:10px;top:1.500px;-webkit-text-stroke:.4px;">×</span></div>
<div class="t" style="left:615px;top:204px;font-size:11px;color:#1e90ff;">0.01</div>
<div class="btn" style="left:655px;top:202px;width:14px;height:14px;"><span style="color:#e00000;font-size:10px;line-height:10px;top:1.500px;-webkit-text-stroke:.4px;">×</span></div>
<div class="t" style="left:705px;top:135px;font-size:11.4px;font-weight:bold;color:#d3d3d3;">Покупки:</div>
<div class="t" style="left:774px;top:135px;font-size:11.4px;font-weight:bold;color:#d3d3d3;">Пар</div>
<div class="t" style="left:813px;top:135px;font-size:11.4px;font-weight:bold;color:#d3d3d3;">Лотов</div>
<div class="t" style="left:864px;top:135px;font-size:11.4px;font-weight:bold;color:#d3d3d3;">Профит</div>
<div class="t" style="left:705px;top:385px;font-size:11.4px;font-weight:bold;color:#d3d3d3;">Продажи:</div>
<div class="t" style="left:780px;top:385px;font-size:11.4px;font-weight:bold;color:#d3d3d3;">Пар</div>
<div class="t" style="left:819px;top:385px;font-size:11.4px;font-weight:bold;color:#d3d3d3;">Лотов</div>
<div class="t" style="left:870px;top:385px;font-size:11.4px;font-weight:bold;color:#d3d3d3;">Профит</div>
<div class="btn" style="left:685px;top:402px;width:13px;height:14px;"><span style="color:#e00000;font-size:10px;line-height:10px;top:1.500px;-webkit-text-stroke:.4px;">×</span></div>
<div class="t" style="left:705px;top:404.8px;font-size:11.4px;font-weight:bold;color:#32cd32;">bbs0</div>
<div class="t" style="left:785px;top:404.8px;font-size:11.4px;font-weight:bold;color:#32cd32;">2</div>
<div class="t" style="left:825px;top:404.8px;font-size:11.4px;font-weight:bold;color:#32cd32;">0.02</div>
<div class="t" style="left:875px;top:404.8px;font-size:11.4px;font-weight:bold;color:#32cd32;">0.6</div>
<div class="t st" style="left:973px;top:127px;">Прибыль</div>
<div class="t st" style="left:1075px;top:127px;">в пунктах</div>
<div class="t st" style="left:1190px;top:127px;">в валюте</div>
<div class="t st" style="left:948px;top:139px;">Текущая прибыль</div>
<div class="t st gn" style="left:1090px;top:139px;">80</div>
<div class="t st gn" style="left:1155px;top:139px;">0.60</div>
<div class="t st gn" style="left:1230px;top:139px;">0.08 %</div>
<div class="t st" style="left:948px;top:151px;">Прибыль за сегодня</div>
<div class="t st gn" style="left:1090px;top:151px;">2681</div>
<div class="t st gn" style="left:1155px;top:151px;">4.21</div>
<div class="t st gn" style="left:1230px;top:151px;">0.53 %</div>
<div class="t st" style="left:948px;top:163px;">Прибыль за 2017.03.10</div>
<div class="t st" style="left:1090px;top:163px;">0</div>
<div class="t st" style="left:1155px;top:163px;">0.00</div>
<div class="t st" style="left:1230px;top:163px;">0.00 %</div>
<div class="t st" style="left:948px;top:175px;">Прибыль за 2017.03.09</div>
<div class="t st" style="left:1090px;top:175px;">0</div>
<div class="t st" style="left:1155px;top:175px;">0.00</div>
<div class="t st" style="left:1230px;top:175px;">0.00 %</div>
<div class="t st" style="left:948px;top:187px;">Прибыль за 2017.03.08</div>
<div class="t st" style="left:1090px;top:187px;">0</div>
<div class="t st" style="left:1155px;top:187px;">0.00</div>
<div class="t st" style="left:1230px;top:187px;">0.00 %</div>
<div class="t st" style="left:948px;top:199px;">Прибыль за 2017.03.07</div>
<div class="t st" style="left:1090px;top:199px;">0</div>
<div class="t st" style="left:1155px;top:199px;">0.00</div>
<div class="t st" style="left:1230px;top:199px;">0.00 %</div>
<div class="t st" style="left:948px;top:211px;">Прибыль за неделю</div>
<div class="t st gn" style="left:1090px;top:211px;">2681</div>
<div class="t st gn" style="left:1155px;top:211px;">4.21</div>
<div class="t st gn" style="left:1230px;top:211px;">0.53 %</div>
<div class="t st" style="left:948px;top:223px;">Прибыль за месяц</div>
<div class="t st gn" style="left:1090px;top:223px;">2681</div>
<div class="t st gn" style="left:1155px;top:223px;">4.21</div>
<div class="t st gn" style="left:1230px;top:223px;">0.53 %</div>
<div class="t st" style="left:948px;top:235px;">Прибыль за квартал</div>
<div class="t st gn" style="left:1090px;top:235px;">2681</div>
<div class="t st gn" style="left:1155px;top:235px;">4.21</div>
<div class="t st gn" style="left:1230px;top:235px;">0.53 %</div>
<div class="t st" style="left:948px;top:247px;">Прибыль за год</div>
<div class="t st gn" style="left:1090px;top:247px;">2681</div>
<div class="t st gn" style="left:1155px;top:247px;">4.21</div>
<div class="t st gn" style="left:1230px;top:247px;">0.53 %</div>
<div style="left:5px;top:214px;width:1546px;height:1px;background:#708090;"></div>
<div style="left:1552px;top:134px;width:3px;height:1px;background:#fff;"></div>
<div class="t ax axp" style="left:1557px;top:130px;">122.855</div>
<div style="left:1552px;top:167px;width:3px;height:1px;background:#fff;"></div>
<div class="t ax axp" style="left:1557px;top:163px;">122.675</div>
<div style="left:1552px;top:200px;width:3px;height:1px;background:#fff;"></div>
<div class="t ax axp" style="left:1557px;top:196px;">122.495</div>
<div style="left:1552px;top:233px;width:3px;height:1px;background:#fff;"></div>
<div class="t ax axp" style="left:1557px;top:229px;">122.310</div>
<div style="left:1552px;top:266px;width:3px;height:1px;background:#fff;"></div>
<div class="t ax axp" style="left:1557px;top:262px;">122.130</div>
<div style="left:1552px;top:299px;width:3px;height:1px;background:#fff;"></div>
<div class="t ax axp" style="left:1557px;top:295px;">121.950</div>
<div style="left:1552px;top:332px;width:3px;height:1px;background:#fff;"></div>
<div class="t ax axp" style="left:1557px;top:328px;">121.770</div>
<div style="left:1552px;top:365px;width:3px;height:1px;background:#fff;"></div>
<div class="t ax axp" style="left:1557px;top:361px;">121.585</div>
<div style="left:1552px;top:398px;width:3px;height:1px;background:#fff;"></div>
<div class="t ax axp" style="left:1557px;top:394px;">121.405</div>
<div style="left:1552px;top:431px;width:3px;height:1px;background:#fff;"></div>
<div class="t ax axp" style="left:1557px;top:427px;">121.225</div>
<div style="left:1552px;top:464px;width:3px;height:1px;background:#fff;"></div>
<div class="t ax axp" style="left:1557px;top:460px;">121.040</div>
<div style="left:1552px;top:497px;width:3px;height:1px;background:#fff;"></div>
<div class="t ax axp" style="left:1557px;top:493px;">120.860</div>
<div style="left:1552px;top:530px;width:3px;height:1px;background:#fff;"></div>
<div class="t ax axp" style="left:1557px;top:526px;">120.680</div>
<div style="left:1552px;top:563px;width:3px;height:1px;background:#fff;"></div>
<div class="t ax axp" style="left:1557px;top:559px;">120.500</div>
<div style="left:1552px;top:596px;width:3px;height:1px;background:#fff;"></div>
<div class="t ax axp" style="left:1557px;top:592px;">120.315</div>
<div style="left:1552px;top:629px;width:3px;height:1px;background:#fff;"></div>
<div class="t ax axp" style="left:1557px;top:625px;">120.135</div>
<div style="left:1552px;top:662px;width:3px;height:1px;background:#fff;"></div>
<div class="t ax axp" style="left:1557px;top:658px;">119.955</div>
<div style="left:1552px;top:209px;width:43px;height:11px;background:#fff;"></div>
<div class="t ax axp" style="left:1557px;top:210px;color:#000;">122.419</div>
<div style="left:5px;top:666px;width:1px;height:3px;background:#fff;"></div>
<div class="t ax" style="left:4px;top:670px;">3 Mar 2017</div>
<div style="left:69px;top:666px;width:1px;height:3px;background:#fff;"></div>
<div class="t ax" style="left:68px;top:670px;">3 Mar 10:30</div>
<div style="left:133px;top:666px;width:1px;height:3px;background:#fff;"></div>
<div class="t ax" style="left:132px;top:670px;">3 Mar 18:30</div>
<div style="left:197px;top:666px;width:1px;height:3px;background:#fff;"></div>
<div class="t ax" style="left:196px;top:670px;">6 Mar 03:30</div>
<div style="left:261px;top:666px;width:1px;height:3px;background:#fff;"></div>
<div class="t ax" style="left:260px;top:670px;">6 Mar 11:30</div>
<div style="left:325px;top:666px;width:1px;height:3px;background:#fff;"></div>
<div class="t ax" style="left:324px;top:670px;">6 Mar 19:30</div>
<div style="left:389px;top:666px;width:1px;height:3px;background:#fff;"></div>
<div class="t ax" style="left:388px;top:670px;">7 Mar 03:30</div>
<div style="left:453px;top:666px;width:1px;height:3px;background:#fff;"></div>
<div class="t ax" style="left:452px;top:670px;">7 Mar 11:30</div>
<div style="left:517px;top:666px;width:1px;height:3px;background:#fff;"></div>
<div class="t ax" style="left:516px;top:670px;">7 Mar 19:30</div>
<div style="left:581px;top:666px;width:1px;height:3px;background:#fff;"></div>
<div class="t ax" style="left:580px;top:670px;">8 Mar 03:30</div>
<div style="left:645px;top:666px;width:1px;height:3px;background:#fff;"></div>
<div class="t ax" style="left:644px;top:670px;">8 Mar 11:30</div>
<div style="left:709px;top:666px;width:1px;height:3px;background:#fff;"></div>
<div class="t ax" style="left:708px;top:670px;">8 Mar 19:30</div>
<div style="left:773px;top:666px;width:1px;height:3px;background:#fff;"></div>
<div class="t ax" style="left:772px;top:670px;">9 Mar 03:30</div>
<div style="left:837px;top:666px;width:1px;height:3px;background:#fff;"></div>
<div class="t ax" style="left:836px;top:670px;">9 Mar 11:30</div>
<div style="left:901px;top:666px;width:1px;height:3px;background:#fff;"></div>
<div class="t ax" style="left:900px;top:670px;">9 Mar 19:30</div>
<div style="left:965px;top:666px;width:1px;height:3px;background:#fff;"></div>
<div class="t ax" style="left:964px;top:670px;">10 Mar 03:30</div>
<div style="left:1029px;top:666px;width:1px;height:3px;background:#fff;"></div>
<div class="t ax" style="left:1028px;top:670px;">10 Mar 11:30</div>
<div style="left:1093px;top:666px;width:1px;height:3px;background:#fff;"></div>
<div class="t ax" style="left:1092px;top:670px;">10 Mar 19:30</div>
<div style="left:1157px;top:666px;width:1px;height:3px;background:#fff;"></div>
<div class="t ax" style="left:1156px;top:670px;">13 Mar 04:30</div>
<div style="left:1221px;top:666px;width:1px;height:3px;background:#fff;"></div>
<div class="t ax" style="left:1220px;top:670px;">13 Mar 12:30</div>
<div style="left:0px;top:686px;width:1600px;height:24px;background:#f0f0f0;"></div>
<div style="left:0px;top:686px;width:1600px;height:2px;background:#fbfbfb;"></div>
<div style="left:0px;top:688px;width:1600px;height:1px;background:#000;"></div>
<div style="left:0px;top:708px;width:1600px;height:2px;background:#f6f6f6;"></div>
<div style="left:0px;top:689px;width:2px;height:18px;background:#6e6e6e;"></div>
<div style="left:6px;top:686px;width:88px;height:21px;background:#fff;border:1px solid #000;border-top:none;"></div>
<div class="t" style="left:17px;top:692.5px;font-size:10.8px;color:#000;">EURJPY,M30</div>
<div class="t tab" style="left:104px;top:692.5px;font-size:10.8px;">XAGUSD,H1</div>
<div class="t tab" style="left:189px;top:692.5px;font-size:10.8px;">EURJPY,H1</div>
<div style="left:178px;top:691px;width:1px;height:13px;background:#808080;"></div>
<div style="left:258px;top:691px;width:1px;height:13px;background:#808080;"></div>
<svg style="left:1567px;top:694px" width="4" height="7" viewBox="0 0 4 7"><path d="M4 0 V7 L0 3.500 Z" fill="#8c8c8c"/></svg>
<svg style="left:1586.500px;top:694px" width="4" height="7" viewBox="0 0 4 7"><path d="M0 0 V7 L4 3.500 Z" fill="#8c8c8c"/></svg>
<div style="left:0px;top:710px;width:1600px;height:136px;background:#f0f0f0;"></div>
<div style="left:1px;top:726px;width:13px;height:118px;background:linear-gradient(90deg,#c2d3e6,#cfdded);"></div>
<svg style="left:4px;top:715px" width="6" height="5.500" viewBox="0 0 7 7" preserveAspectRatio="none" stroke="#000" stroke-width="1.700"><path d="M0.500 0.500 L6.500 6.500 M6.500 0.500 L0.500 6.500"/></svg>
<div class="t" style="left:2px;top:841px;font-size:11px;color:#1a1a1a;transform:rotate(-90deg);transform-origin:0 0;height:12px;line-height:12px;">Терминал</div>
<div style="left:15px;top:712px;width:1582px;height:110px;background:#fff;border-top:1px solid #a8a8a8;border-left:1px solid #a8a8a8;border-right:1px solid #d8d8d8;"></div>
<div style="left:16px;top:713px;width:1580px;height:24px;background:linear-gradient(180deg,#ffffff,#f8fafd);border-bottom:1px solid #d5dfea;"></div>
<div style="left:16px;top:757px;width:1580px;height:20px;background:#ececec;"></div>
<div style="left:16px;top:777px;width:1580px;height:20px;background:#c8c8c8;"></div>
<div style="left:16px;top:757px;width:1580px;height:1px;background:#dcdcdc;"></div>
<div style="left:171px;top:713px;width:1px;height:24px;background:#dbe5f1;"></div>
<div style="left:170px;top:737px;width:1px;height:40px;background:#c6c6c6;"></div>
<div style="left:388px;top:713px;width:1px;height:24px;background:#dbe5f1;"></div>
<div style="left:387px;top:737px;width:1px;height:40px;background:#c6c6c6;"></div>
<div style="left:496px;top:713px;width:1px;height:24px;background:#dbe5f1;"></div>
<div style="left:495px;top:737px;width:1px;height:40px;background:#c6c6c6;"></div>
<div style="left:580px;top:713px;width:1px;height:24px;background:#dbe5f1;"></div>
<div style="left:579px;top:737px;width:1px;height:40px;background:#c6c6c6;"></div>
<div style="left:688px;top:713px;width:1px;height:24px;background:#dbe5f1;"></div>
<div style="left:687px;top:737px;width:1px;height:40px;background:#c6c6c6;"></div>
<div style="left:807px;top:713px;width:1px;height:24px;background:#dbe5f1;"></div>
<div style="left:806px;top:737px;width:1px;height:40px;background:#c6c6c6;"></div>
<div style="left:928px;top:713px;width:1px;height:24px;background:#dbe5f1;"></div>
<div style="left:927px;top:737px;width:1px;height:40px;background:#c6c6c6;"></div>
<div style="left:1049px;top:713px;width:1px;height:24px;background:#dbe5f1;"></div>
<div style="left:1048px;top:737px;width:1px;height:40px;background:#c6c6c6;"></div>
<div style="left:1169px;top:713px;width:1px;height:24px;background:#dbe5f1;"></div>
<div style="left:1168px;top:737px;width:1px;height:40px;background:#c6c6c6;"></div>
<div style="left:1289px;top:713px;width:1px;height:24px;background:#dbe5f1;"></div>
<div style="left:1288px;top:737px;width:1px;height:40px;background:#c6c6c6;"></div>
<div style="left:1408px;top:713px;width:1px;height:24px;background:#dbe5f1;"></div>
<div style="left:1407px;top:737px;width:1px;height:40px;background:#c6c6c6;"></div>
<div class="t cell" style="left:23px;top:718.5px;font-size:12px;"><span style="font-size:11.3px">Ордер</span>&nbsp;&nbsp;&nbsp; <span style="color:#888;font-size:9px;">⁄</span></div>
<div class="t cell" style="right:1217px;top:718.5px;font-size:12px;">Время</div>
<div class="t cell" style="right:1109px;top:718.5px;font-size:12px;">Тип</div>
<div class="t cell" style="right:1025px;top:718.5px;font-size:12px;">Объем</div>
<div class="t cell" style="right:917px;top:718.5px;font-size:12px;">Символ</div>
<div class="t cell" style="right:797px;top:718.5px;font-size:12px;">Цена</div>
<div class="t cell" style="right:677px;top:718.5px;font-size:12px;">S / L</div>
<div class="t cell" style="right:557px;top:718.5px;font-size:12px;">T / P</div>
<div class="t cell" style="right:437px;top:718.5px;font-size:12px;">Цена</div>
<div class="t cell" style="right:317px;top:718.5px;font-size:12px;">Комиссия</div>
<div class="t cell" style="right:197px;top:718.5px;font-size:12px;">Своп</div>
<div class="t cell" style="right:10px;top:718.5px;font-size:12px;">Прибыль</div>
<svg style="left:19px;top:739px" width="14" height="15" viewBox="0 0 14 15" ><path d="M1.500 1.500 h6.500 l3 3 v9 h-9.500 z" fill="#fff" stroke="#555"/><path d="M8 1.500 v3 h3" fill="none" stroke="#555"/><circle cx="10" cy="11" r="3" fill="#e8522a" stroke="#b53a18" stroke-width="0.700"/></svg>
<div class="t cell" style="left:38px;top:741.6px;">147707728</div>
<div class="t cell" style="right:1215px;top:741.6px;">2017.03.13 08:30:45</div>
<div class="t cell" style="right:1107px;top:741.6px;">sell</div>
<div class="t cell" style="right:1024px;top:741.6px;">0.01</div>
<div class="t cell" style="right:916px;top:741.6px;">nzdusd</div>
<div class="t cell" style="right:795px;top:741.6px;">0.69389</div>
<div class="t cell" style="right:675px;top:741.6px;">0.00000</div>
<div class="t cell" style="right:555px;top:741.6px;">0.68989</div>
<div class="t cell" style="right:435px;top:741.6px;">0.69284</div>
<div class="t cell" style="right:315px;top:741.6px;">-0.10</div>
<div class="t cell" style="right:195px;top:741.6px;">0.00</div>
<div class="t cell" style="right:27px;top:741.6px;">1.05</div>
<svg style="left:1581px;top:743px" width="8" height="8" viewBox="0 0 8 8" stroke="#8a8a8a" stroke-width="2"><path d="M0.700 0.700 L7.300 7.300 M7.300 0.700 L0.700 7.300"/></svg>
<svg style="left:19px;top:759px" width="14" height="15" viewBox="0 0 14 15" ><path d="M1.500 1.500 h6.500 l3 3 v9 h-9.500 z" fill="#fff" stroke="#555"/><path d="M8 1.500 v3 h3" fill="none" stroke="#555"/><circle cx="10" cy="11" r="3" fill="#e8522a" stroke="#b53a18" stroke-width="0.700"/></svg>
<div class="t cell" style="left:38px;top:761.6px;">147742243</div>
<div class="t cell" style="right:1215px;top:761.6px;">2017.03.13 13:00:03</div>
<div class="t cell" style="right:1107px;top:761.6px;">sell</div>
<div class="t cell" style="right:1024px;top:761.6px;">0.01</div>
<div class="t cell" style="right:916px;top:761.6px;">audusd</div>
<div class="t cell" style="right:795px;top:761.6px;">0.75690</div>
<div class="t cell" style="right:675px;top:761.6px;">0.00000</div>
<div class="t cell" style="right:555px;top:761.6px;">0.75290</div>
<div class="t cell" style="right:435px;top:761.6px;">0.75715</div>
<div class="t cell" style="right:315px;top:761.6px;">-0.10</div>
<div class="t cell" style="right:195px;top:761.6px;">0.00</div>
<div class="t cell" style="right:27px;top:761.6px;">-0.25</div>
<svg style="left:1581px;top:763px" width="8" height="8" viewBox="0 0 8 8" stroke="#8a8a8a" stroke-width="2"><path d="M0.700 0.700 L7.300 7.300 M7.300 0.700 L0.700 7.300"/></svg>
<svg style="left:19px;top:780px" width="12" height="13" viewBox="0 0 12 13" ><rect x="0.500" y="0.500" width="11" height="12" rx="1.500" fill="#fff" stroke="#6a6a6a"/><path d="M6 2.500 L9.500 6.500 H7.500 V10 H4.500 V6.500 H2.500 Z" fill="#1fa51f"/></svg>
<div class="t cell" style="left:38px;top:781px;font-weight:bold;letter-spacing:.36px;">Баланс: 793.31 USD&nbsp; Кредит: 160.08&nbsp; Средства: 953.99&nbsp; Маржа: 7.25&nbsp; Свободная маржа: 946.74&nbsp; Уровень: 13150.64%</div>
<div class="t cell" style="right:28px;top:781px;font-weight:bold;letter-spacing:.3px;">0.60</div>
<div style="left:16px;top:821px;width:1580px;height:1px;background:#000;"></div>
<div style="left:18px;top:821px;width:72px;height:20px;background:#fff;border:1px solid #000;border-top:1px solid #fff;"></div>
<div class="t" style="left:28px;top:825px;font-size:12px;color:#000;">Торговля</div>
<div class="t tab" style="left:100px;top:825px;">Активы</div>
<div style="left:151px;top:824px;width:1px;height:13px;background:#808080;"></div>
<div class="t tab" style="left:161px;top:825px;">История Счета</div>
<div style="left:253px;top:824px;width:1px;height:13px;background:#808080;"></div>
<div class="t tab" style="left:263px;top:825px;">Новости</div>
<div style="left:331px;top:824px;width:1px;height:13px;background:#808080;"></div>
<div class="t tab" style="left:342px;top:825px;">Алерты</div>
<div style="left:394px;top:824px;width:1px;height:13px;background:#808080;"></div>
<div class="t tab" style="left:404px;top:825px;">Почта</div>
<div style="left:448px;top:824px;width:1px;height:13px;background:#808080;"></div>
<div class="t tab" style="left:458px;top:825px;">Маркет</div>
<div style="left:509px;top:824px;width:1px;height:13px;background:#808080;"></div>
<div class="t tab" style="left:519px;top:825px;">Сигналы</div>
<div style="left:578px;top:824px;width:1px;height:13px;background:#808080;"></div>
<div class="t tab" style="left:588px;top:825px;">Библиотека</div>
<div style="left:663px;top:824px;width:1px;height:13px;background:#808080;"></div>
<div class="t tab" style="left:673px;top:825px;">Эксперты</div>
<div style="left:736px;top:824px;width:1px;height:13px;background:#808080;"></div>
<div class="t tab" style="left:746px;top:825px;">Журнал</div>
<div style="left:800px;top:824px;width:1px;height:13px;background:#808080;"></div>
<div class="t" style="left:312px;top:830.5px;font-size:9.3px;font-weight:bold;color:#e02020;">99</div>
<div style="left:0px;top:846px;width:1600px;height:24px;background:#f0f0f0;border-top:1px solid #b8b8b8;"></div>
<div class="t" style="left:3px;top:854px;font-size:11.7px;color:#000;">Для вызова справки нажмите F1</div>
<div style="left:906px;top:851px;width:1px;height:17px;background:#b4b4b4;"></div>
<div style="left:1022px;top:851px;width:1px;height:17px;background:#b4b4b4;"></div>
<div style="left:1124px;top:851px;width:1px;height:17px;background:#b4b4b4;"></div>
<div style="left:1195px;top:851px;width:1px;height:17px;background:#b4b4b4;"></div>
<div style="left:1266px;top:851px;width:1px;height:17px;background:#b4b4b4;"></div>
<div style="left:1334px;top:851px;width:1px;height:17px;background:#b4b4b4;"></div>
<div style="left:1405px;top:851px;width:1px;height:17px;background:#b4b4b4;"></div>
<div style="left:1470px;top:851px;width:1px;height:17px;background:#b4b4b4;"></div>
<div class="t" style="left:1028px;top:854.5px;font-size:11px;color:#000;">2017.03.09 03:30</div>
<div class="t" style="left:1130px;top:854.5px;font-size:11px;color:#000;">O: 120.604</div>
<div class="t" style="left:1201px;top:854.5px;font-size:11px;color:#000;">H: 120.639</div>
<div class="t" style="left:1272px;top:854.5px;font-size:11px;color:#000;">L: 120.594</div>
<div class="t" style="left:1340px;top:854.5px;font-size:11px;color:#000;">C: 120.603</div>
<div class="t" style="left:1410px;top:854.5px;font-size:11px;color:#000;">V: 2067</div>
<div class="t" style="left:1503px;top:854.5px;font-size:11px;color:#000;">5869/17 kb</div>
<svg style="left:1476px;top:853px" width="24" height="13" viewBox="0 0 24 13" ><rect x="0.0" y="0" width="1.500" height="13" fill="#3a7d1e"/><rect x="2.4" y="0" width="1.500" height="13" fill="#3a7d1e"/><rect x="4.8" y="0" width="1.500" height="13" fill="#3a7d1e"/><rect x="7.199999999999999" y="0" width="1.500" height="13" fill="#3a7d1e"/><rect x="9.6" y="0" width="1.500" height="13" fill="#3a7d1e"/><rect x="12.0" y="0" width="1.500" height="13" fill="#3a7d1e"/><rect x="14.399999999999999" y="1.2" width="1.500" height="11.8" fill="#3a7d1e"/><rect x="16.8" y="2.4" width="1.500" height="10.6" fill="#3b6fb8"/><rect x="19.2" y="3.5999999999999996" width="1.500" height="9.4" fill="#3b6fb8"/><rect x="21.599999999999998" y="4.8" width="1.500" height="8.2" fill="#3b6fb8"/></svg>
<svg style="left:0;top:0" width="1600" height="870" viewBox="0 0 1600 870" fill="none" stroke-width="1" shape-rendering="crispEdges"><path stroke="#1e90ff" d="M5.5 620V643M4 639.5h1.5M5.5 625.5h1.5M9.5 625V638M8 636.5h1.5M9.5 629.5h1.5M13.5 614V630M12 627.5h1.5M13.5 618.5h1.5M33.5 640V650M32 648.5h1.5M33.5 642.5h1.5M37.5 626V651M36 642.5h1.5M37.5 633.5h1.5M41.5 625V641M40 637.5h1.5M41.5 629.5h1.5M45.5 621V650M44 646.5h1.5M45.5 632.5h1.5M49.5 621V640M48 636.5h1.5M49.5 628.5h1.5M53.5 611V636M52 632.5h1.5M53.5 615.5h1.5M57.5 611V633M56 626.5h1.5M57.5 615.5h1.5M61.5 608V631M60 625.5h1.5M61.5 612.5h1.5M65.5 604V623M64 619.5h1.5M65.5 609.5h1.5M73.5 604V632M72 627.5h1.5M73.5 608.5h1.5M77.5 540V606M76 591.5h1.5M77.5 560.5h1.5M81.5 521V557M80 547.5h1.5M81.5 528.5h1.5M93.5 499V516M92 511.5h1.5M93.5 502.5h1.5M101.5 498V516M100 512.5h1.5M101.5 504.5h1.5M105.5 482V505M104 502.5h1.5M105.5 491.5h1.5M125.5 480V493M124 490.5h1.5M125.5 485.5h1.5M129.5 478V488M128 485.5h1.5M129.5 481.5h1.5M137.5 477V511M136 499.5h1.5M137.5 489.5h1.5M141.5 469V498M140 490.5h1.5M141.5 476.5h1.5M145.5 464V500M144 489.5h1.5M145.5 469.5h1.5M153.5 474V502M152 497.5h1.5M153.5 483.5h1.5M161.5 467V498M160 491.5h1.5M161.5 471.5h1.5M165.5 438V480M164 474.5h1.5M165.5 445.5h1.5M169.5 444V471M168 462.5h1.5M169.5 448.5h1.5M185.5 522V530M184 527.5h1.5M185.5 524.5h1.5M189.5 510V524M188 519.5h1.5M189.5 515.5h1.5M205.5 519V528M204 526.5h1.5M205.5 520.5h1.5M213.5 516V526M212 524.5h1.5M213.5 519.5h1.5M217.5 515V528M216 525.5h1.5M217.5 517.5h1.5M233.5 541V563M232 560.5h1.5M233.5 548.5h1.5M237.5 534V549M236 544.5h1.5M237.5 539.5h1.5M241.5 497V557M240 537.5h1.5M241.5 518.5h1.5M261.5 561V583M260 580.5h1.5M261.5 566.5h1.5M273.5 567V583M272 577.5h1.5M273.5 569.5h1.5M277.5 557V574M276 571.5h1.5M277.5 562.5h1.5M285.5 552V568M284 566.5h1.5M285.5 555.5h1.5M289.5 540V568M288 557.5h1.5M289.5 550.5h1.5M293.5 531V564M292 556.5h1.5M293.5 539.5h1.5M297.5 524V548M296 544.5h1.5M297.5 527.5h1.5M309.5 535V554M308 547.5h1.5M309.5 537.5h1.5M317.5 532V546M316 544.5h1.5M317.5 536.5h1.5M321.5 527V540M320 535.5h1.5M321.5 530.5h1.5M329.5 537V544M328 542.5h1.5M329.5 538.5h1.5M349.5 558V567M348 564.5h1.5M349.5 561.5h1.5M353.5 559V571M352 567.5h1.5M353.5 563.5h1.5M357.5 548V567M356 562.5h1.5M357.5 551.5h1.5M361.5 544V561M360 559.5h1.5M361.5 548.5h1.5M369.5 554V567M368 563.5h1.5M369.5 556.5h1.5M373.5 546V563M372 559.5h1.5M373.5 552.5h1.5M377.5 533V547M376 542.5h1.5M377.5 538.5h1.5M389.5 533V540M388 539.5h1.5M389.5 534.5h1.5M397.5 534V547M396 544.5h1.5M397.5 538.5h1.5M409.5 548V554M408 552.5h1.5M409.5 550.5h1.5M413.5 545V552M412 550.5h1.5M413.5 547.5h1.5M417.5 536V550M416 545.5h1.5M417.5 538.5h1.5M421.5 532V543M420 539.5h1.5M421.5 534.5h1.5M425.5 528V557M424 551.5h1.5M425.5 539.5h1.5M437.5 543V555M436 553.5h1.5M437.5 545.5h1.5M449.5 563V583M448 577.5h1.5M449.5 570.5h1.5M453.5 557V580M452 574.5h1.5M453.5 562.5h1.5M469.5 562V580M468 574.5h1.5M469.5 566.5h1.5M473.5 540V567M472 562.5h1.5M473.5 549.5h1.5M489.5 536V567M488 556.5h1.5M489.5 541.5h1.5M497.5 537V552M496 547.5h1.5M497.5 541.5h1.5M501.5 537V549M500 545.5h1.5M501.5 540.5h1.5M521.5 558V569M520 566.5h1.5M521.5 560.5h1.5M533.5 563V571M532 568.5h1.5M533.5 565.5h1.5M545.5 565V582M544 578.5h1.5M545.5 570.5h1.5M549.5 570V580M548 577.5h1.5M549.5 573.5h1.5M561.5 572V596M560 589.5h1.5M561.5 578.5h1.5M573.5 594V609M572 604.5h1.5M573.5 599.5h1.5M597.5 636V644M596 642.5h1.5M597.5 637.5h1.5M601.5 621V641M600 634.5h1.5M601.5 627.5h1.5M613.5 623V635M612 631.5h1.5M613.5 627.5h1.5M617.5 615V635M616 628.5h1.5M617.5 619.5h1.5M621.5 600V628M620 621.5h1.5M621.5 606.5h1.5M625.5 592V613M624 606.5h1.5M625.5 600.5h1.5M629.5 600V613M628 610.5h1.5M629.5 602.5h1.5M633.5 577V605M632 599.5h1.5M633.5 584.5h1.5M641.5 574V595M640 592.5h1.5M641.5 580.5h1.5M645.5 569V582M644 579.5h1.5M645.5 572.5h1.5M661.5 547V597M660 578.5h1.5M661.5 563.5h1.5M665.5 500V550M664 541.5h1.5M665.5 507.5h1.5M669.5 482V515M668 504.5h1.5M669.5 486.5h1.5M673.5 450V487M672 481.5h1.5M673.5 457.5h1.5M681.5 458V503M680 495.5h1.5M681.5 473.5h1.5M709.5 521V535M708 530.5h1.5M709.5 523.5h1.5M717.5 526V546M716 542.5h1.5M717.5 531.5h1.5M729.5 543V565M728 561.5h1.5M729.5 549.5h1.5M737.5 537V572M736 566.5h1.5M737.5 542.5h1.5M741.5 536V548M740 546.5h1.5M741.5 538.5h1.5M745.5 528V545M744 542.5h1.5M745.5 533.5h1.5M753.5 521V543M752 540.5h1.5M753.5 526.5h1.5M757.5 517V533M756 531.5h1.5M757.5 520.5h1.5M785.5 543V564M784 556.5h1.5M785.5 549.5h1.5M797.5 537V550M796 547.5h1.5M797.5 540.5h1.5M813.5 533V558M812 550.5h1.5M813.5 537.5h1.5M817.5 481V541M816 523.5h1.5M817.5 502.5h1.5M821.5 406V497M820 480.5h1.5M821.5 424.5h1.5M829.5 394V438M828 428.5h1.5M829.5 401.5h1.5M845.5 449V492M844 483.5h1.5M845.5 458.5h1.5M849.5 448V458M848 456.5h1.5M849.5 449.5h1.5M861.5 354V496M860 469.5h1.5M861.5 371.5h1.5M865.5 311V388M864 371.5h1.5M865.5 322.5h1.5M869.5 340V386M868 380.5h1.5M869.5 346.5h1.5M877.5 358V382M876 376.5h1.5M877.5 365.5h1.5M885.5 386V416M884 406.5h1.5M885.5 395.5h1.5M889.5 388V400M888 398.5h1.5M889.5 391.5h1.5M897.5 368V395M896 387.5h1.5M897.5 376.5h1.5M901.5 361V378M900 372.5h1.5M901.5 363.5h1.5M905.5 357V376M904 371.5h1.5M905.5 364.5h1.5M909.5 345V376M908 366.5h1.5M909.5 355.5h1.5M913.5 334V357M912 351.5h1.5M913.5 338.5h1.5M925.5 357V376M924 369.5h1.5M925.5 362.5h1.5M929.5 359V380M928 374.5h1.5M929.5 365.5h1.5M933.5 338V368M932 364.5h1.5M933.5 343.5h1.5M937.5 326V349M936 344.5h1.5M937.5 330.5h1.5M941.5 323V337M940 332.5h1.5M941.5 325.5h1.5M945.5 280V331M944 317.5h1.5M945.5 294.5h1.5M953.5 290V310M952 308.5h1.5M953.5 295.5h1.5M961.5 282V302M960 297.5h1.5M961.5 287.5h1.5M965.5 278V288M964 287.5h1.5M965.5 281.5h1.5M973.5 273V286M972 284.5h1.5M973.5 275.5h1.5M977.5 273V283M976 281.5h1.5M977.5 276.5h1.5M981.5 247V280M980 268.5h1.5M981.5 257.5h1.5M985.5 240V252M984 249.5h1.5M985.5 243.5h1.5M989.5 231V247M988 242.5h1.5M989.5 235.5h1.5M1001.5 231V252M1000 248.5h1.5M1001.5 234.5h1.5M1005.5 233V261M1004 255.5h1.5M1005.5 242.5h1.5M1009.5 195V249M1008 242.5h1.5M1009.5 209.5h1.5M1021.5 192V214M1020 210.5h1.5M1021.5 199.5h1.5M1025.5 191V215M1024 209.5h1.5M1025.5 197.5h1.5M1037.5 206V219M1036 214.5h1.5M1037.5 211.5h1.5M1045.5 205V224M1044 217.5h1.5M1045.5 211.5h1.5M1053.5 156V261M1052 223.5h1.5M1053.5 174.5h1.5M1069.5 213V266M1068 253.5h1.5M1069.5 231.5h1.5M1073.5 140V206M1072 186.5h1.5M1073.5 163.5h1.5M1089.5 189V196M1088 195.5h1.5M1089.5 191.5h1.5M1093.5 168V194M1092 189.5h1.5M1093.5 172.5h1.5M1097.5 152V168M1096 163.5h1.5M1097.5 155.5h1.5M1101.5 152V168M1100 163.5h1.5M1101.5 154.5h1.5M1125.5 162V184M1124 179.5h1.5M1125.5 167.5h1.5M1129.5 143V173M1128 169.5h1.5M1129.5 149.5h1.5M1145.5 146V161M1144 158.5h1.5M1145.5 150.5h1.5M1149.5 130V149M1148 142.5h1.5M1149.5 134.5h1.5M1157.5 135V154M1156 147.5h1.5M1157.5 140.5h1.5M1169.5 152V165M1168 162.5h1.5M1169.5 156.5h1.5M1185.5 139V171M1184 164.5h1.5M1185.5 147.5h1.5M1205.5 234V266M1204 261.5h1.5M1205.5 239.5h1.5M1209.5 238V258M1208 251.5h1.5M1209.5 241.5h1.5M1217.5 230V253M1216 244.5h1.5M1217.5 238.5h1.5M1225.5 215V237M1224 234.5h1.5M1225.5 219.5h1.5M1233.5 211V237M1232 232.5h1.5M1233.5 216.5h1.5"/><path stroke="#fa8072" d="M17.5 617V630M16 619.5h1.5M17.5 627.5h1.5M21.5 623V643M20 626.5h1.5M21.5 638.5h1.5M25.5 634V647M24 636.5h1.5M25.5 645.5h1.5M29.5 637V650M28 640.5h1.5M29.5 646.5h1.5M69.5 601V628M68 608.5h1.5M69.5 624.5h1.5M85.5 520V542M84 525.5h1.5M85.5 538.5h1.5M89.5 525V541M88 530.5h1.5M89.5 536.5h1.5M97.5 495V518M96 501.5h1.5M97.5 510.5h1.5M109.5 495V515M108 500.5h1.5M109.5 509.5h1.5M113.5 489V526M112 495.5h1.5M113.5 517.5h1.5M117.5 479V522M116 485.5h1.5M117.5 509.5h1.5M121.5 482V506M120 490.5h1.5M121.5 500.5h1.5M133.5 480V502M132 486.5h1.5M133.5 497.5h1.5M149.5 471V498M148 479.5h1.5M149.5 488.5h1.5M157.5 479V497M156 483.5h1.5M157.5 492.5h1.5M173.5 462V497M172 467.5h1.5M173.5 491.5h1.5M177.5 487V533M176 497.5h1.5M177.5 517.5h1.5M181.5 510V528M180 513.5h1.5M181.5 524.5h1.5M193.5 514V522M192 516.5h1.5M193.5 520.5h1.5M197.5 512V522M196 514.5h1.5M197.5 519.5h1.5M201.5 517V523M200 519.5h1.5M201.5 522.5h1.5M209.5 519V526M208 520.5h1.5M209.5 524.5h1.5M221.5 515V528M220 518.5h1.5M221.5 525.5h1.5M225.5 518V531M224 523.5h1.5M225.5 527.5h1.5M229.5 528V565M228 537.5h1.5M229.5 555.5h1.5M245.5 504V521M244 508.5h1.5M245.5 517.5h1.5M249.5 498V527M248 502.5h1.5M249.5 519.5h1.5M253.5 519V591M252 529.5h1.5M253.5 581.5h1.5M257.5 552V591M256 559.5h1.5M257.5 585.5h1.5M265.5 552V576M264 555.5h1.5M265.5 572.5h1.5M269.5 559V574M268 561.5h1.5M269.5 571.5h1.5M281.5 546V567M280 550.5h1.5M281.5 563.5h1.5M301.5 525V552M300 531.5h1.5M301.5 547.5h1.5M305.5 531V553M304 538.5h1.5M305.5 549.5h1.5M313.5 531V548M312 535.5h1.5M313.5 545.5h1.5M325.5 528V543M324 533.5h1.5M325.5 538.5h1.5M333.5 537V552M332 539.5h1.5M333.5 547.5h1.5M337.5 541V557M336 545.5h1.5M337.5 552.5h1.5M341.5 547V560M340 550.5h1.5M341.5 558.5h1.5M345.5 553V564M344 557.5h1.5M345.5 560.5h1.5M365.5 545V565M364 548.5h1.5M365.5 561.5h1.5M381.5 535V545M380 539.5h1.5M381.5 543.5h1.5M385.5 535V543M384 536.5h1.5M385.5 542.5h1.5M393.5 534V544M392 537.5h1.5M393.5 540.5h1.5M401.5 537V546M400 540.5h1.5M401.5 543.5h1.5M405.5 540V548M404 541.5h1.5M405.5 546.5h1.5M429.5 524V548M428 529.5h1.5M429.5 539.5h1.5M433.5 537V557M432 543.5h1.5M433.5 554.5h1.5M441.5 542V556M440 547.5h1.5M441.5 551.5h1.5M445.5 550V581M444 555.5h1.5M445.5 571.5h1.5M457.5 562V578M456 564.5h1.5M457.5 576.5h1.5M461.5 563V575M460 567.5h1.5M461.5 572.5h1.5M465.5 563V582M464 568.5h1.5M465.5 575.5h1.5M477.5 524V558M476 530.5h1.5M477.5 551.5h1.5M481.5 541V564M480 545.5h1.5M481.5 558.5h1.5M485.5 548V567M484 552.5h1.5M485.5 563.5h1.5M493.5 534V556M492 539.5h1.5M493.5 551.5h1.5M505.5 538V552M504 542.5h1.5M505.5 548.5h1.5M509.5 549V563M508 553.5h1.5M509.5 561.5h1.5M513.5 551V562M512 554.5h1.5M513.5 560.5h1.5M517.5 557V568M516 558.5h1.5M517.5 564.5h1.5M525.5 554V564M524 557.5h1.5M525.5 561.5h1.5M529.5 561V567M528 562.5h1.5M529.5 565.5h1.5M537.5 560V580M536 563.5h1.5M537.5 575.5h1.5M541.5 565V580M540 568.5h1.5M541.5 577.5h1.5M553.5 574V582M552 577.5h1.5M553.5 580.5h1.5M557.5 574V589M556 578.5h1.5M557.5 585.5h1.5M565.5 576V587M564 579.5h1.5M565.5 584.5h1.5M569.5 584V611M568 591.5h1.5M569.5 601.5h1.5M577.5 598V609M576 602.5h1.5M577.5 607.5h1.5M585.5 604V628M584 612.5h1.5M585.5 624.5h1.5M589.5 624V640M588 626.5h1.5M589.5 636.5h1.5M593.5 630V650M592 633.5h1.5M593.5 646.5h1.5M605.5 622V630M604 623.5h1.5M605.5 628.5h1.5M609.5 621V636M608 625.5h1.5M609.5 634.5h1.5M637.5 580V591M636 582.5h1.5M637.5 589.5h1.5M649.5 568V582M648 570.5h1.5M649.5 579.5h1.5M653.5 576V591M652 580.5h1.5M653.5 587.5h1.5M657.5 577V598M656 580.5h1.5M657.5 590.5h1.5M677.5 459V502M676 469.5h1.5M677.5 487.5h1.5M685.5 458V475M684 461.5h1.5M685.5 469.5h1.5M689.5 459V490M688 467.5h1.5M689.5 481.5h1.5M693.5 480V502M692 483.5h1.5M693.5 499.5h1.5M697.5 494V512M696 499.5h1.5M697.5 508.5h1.5M701.5 506V527M700 509.5h1.5M701.5 519.5h1.5M705.5 511V537M704 518.5h1.5M705.5 528.5h1.5M713.5 519V546M712 523.5h1.5M713.5 537.5h1.5M721.5 524V546M720 530.5h1.5M721.5 538.5h1.5M725.5 538V558M724 542.5h1.5M725.5 555.5h1.5M733.5 543V565M732 546.5h1.5M733.5 561.5h1.5M749.5 529V545M748 533.5h1.5M749.5 542.5h1.5M761.5 518V534M760 523.5h1.5M761.5 530.5h1.5M765.5 524V541M764 527.5h1.5M765.5 537.5h1.5M769.5 534V555M768 542.5h1.5M769.5 552.5h1.5M773.5 537V547M772 540.5h1.5M773.5 545.5h1.5M777.5 542V560M776 546.5h1.5M777.5 554.5h1.5M781.5 551V562M780 553.5h1.5M781.5 559.5h1.5M789.5 540V552M788 543.5h1.5M789.5 548.5h1.5M801.5 536V550M800 538.5h1.5M801.5 548.5h1.5M805.5 540V551M804 542.5h1.5M805.5 548.5h1.5M809.5 536V555M808 540.5h1.5M809.5 552.5h1.5M825.5 418V448M824 424.5h1.5M825.5 441.5h1.5M833.5 420V442M832 424.5h1.5M833.5 434.5h1.5M837.5 430V459M836 441.5h1.5M837.5 451.5h1.5M841.5 449V488M840 456.5h1.5M841.5 474.5h1.5M853.5 444V495M852 456.5h1.5M853.5 482.5h1.5M857.5 471V497M856 475.5h1.5M857.5 490.5h1.5M873.5 347V378M872 353.5h1.5M873.5 372.5h1.5M881.5 373V419M880 387.5h1.5M881.5 406.5h1.5M893.5 383V399M892 389.5h1.5M893.5 396.5h1.5M917.5 340V359M916 345.5h1.5M917.5 353.5h1.5M921.5 351V372M920 358.5h1.5M921.5 365.5h1.5M949.5 291V310M948 296.5h1.5M949.5 304.5h1.5M957.5 295V304M956 298.5h1.5M957.5 301.5h1.5M969.5 281V290M968 284.5h1.5M969.5 288.5h1.5M993.5 233V247M992 237.5h1.5M993.5 243.5h1.5M997.5 237V252M996 241.5h1.5M997.5 250.5h1.5M1013.5 190V214M1012 193.5h1.5M1013.5 209.5h1.5M1017.5 199V215M1016 204.5h1.5M1017.5 210.5h1.5M1029.5 194V209M1028 198.5h1.5M1029.5 207.5h1.5M1033.5 202V219M1032 208.5h1.5M1033.5 216.5h1.5M1041.5 204V219M1040 206.5h1.5M1041.5 215.5h1.5M1049.5 201V252M1048 213.5h1.5M1049.5 242.5h1.5M1057.5 168V206M1056 175.5h1.5M1057.5 196.5h1.5M1061.5 221V259M1060 227.5h1.5M1061.5 249.5h1.5M1065.5 219V285M1064 243.5h1.5M1065.5 275.5h1.5M1077.5 139V171M1076 145.5h1.5M1077.5 160.5h1.5M1081.5 153V181M1080 160.5h1.5M1081.5 177.5h1.5M1085.5 168V200M1084 172.5h1.5M1085.5 192.5h1.5M1105.5 149V171M1104 156.5h1.5M1105.5 168.5h1.5M1109.5 154V185M1108 165.5h1.5M1109.5 176.5h1.5M1113.5 173V206M1112 185.5h1.5M1113.5 200.5h1.5M1117.5 187V205M1116 191.5h1.5M1117.5 201.5h1.5M1121.5 163V180M1120 169.5h1.5M1121.5 175.5h1.5M1133.5 151V168M1132 153.5h1.5M1133.5 162.5h1.5M1137.5 151V170M1136 155.5h1.5M1137.5 163.5h1.5M1141.5 152V163M1140 154.5h1.5M1141.5 161.5h1.5M1153.5 129V149M1152 136.5h1.5M1153.5 142.5h1.5M1161.5 142V158M1160 148.5h1.5M1161.5 154.5h1.5M1165.5 149V160M1164 152.5h1.5M1165.5 159.5h1.5M1173.5 148V163M1172 153.5h1.5M1173.5 159.5h1.5M1177.5 154V166M1176 156.5h1.5M1177.5 164.5h1.5M1181.5 158V168M1180 162.5h1.5M1181.5 166.5h1.5M1189.5 140V173M1188 147.5h1.5M1189.5 163.5h1.5M1193.5 171V239M1192 196.5h1.5M1193.5 226.5h1.5M1197.5 199V229M1196 208.5h1.5M1197.5 223.5h1.5M1201.5 224V256M1200 232.5h1.5M1201.5 249.5h1.5M1213.5 240V258M1212 244.5h1.5M1213.5 255.5h1.5M1221.5 218V239M1220 223.5h1.5M1221.5 236.5h1.5M1229.5 210V232M1228 215.5h1.5M1229.5 229.5h1.5"/><path stroke="#ffff00" d="M581.5 603V613M580 604.5h3M793.5 547V558M792 548.5h3"/><rect x="605" y="629" width="1" height="6" fill="#dc143c" stroke="none"/></svg>
</body></html>
